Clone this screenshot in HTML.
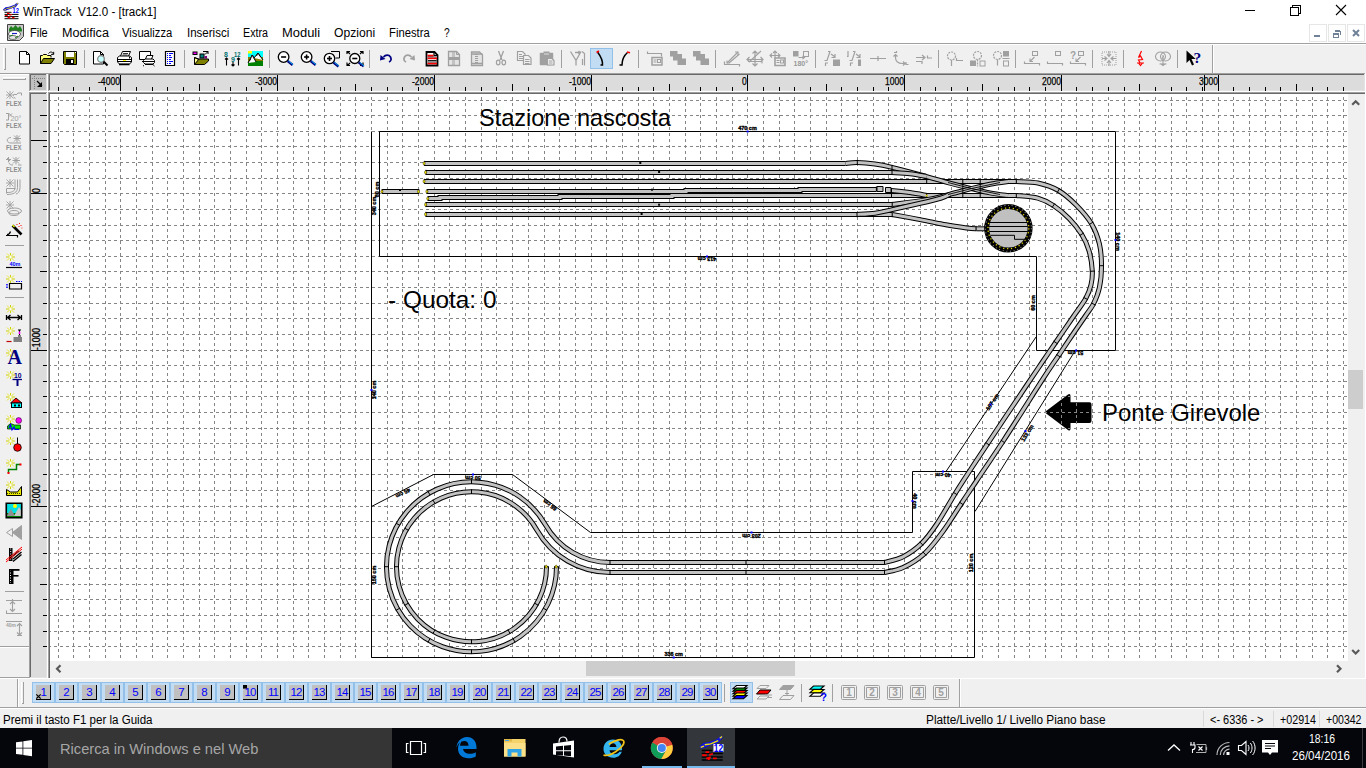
<!DOCTYPE html><html><head><meta charset="utf-8"><title>WinTrack V12.0 - [track1]</title><style>
*{box-sizing:border-box;margin:0;padding:0}
html,body{width:1366px;height:768px;overflow:hidden;background:#f0f0f0}
body{position:relative;font-family:"Liberation Sans",sans-serif;font-size:12px;color:#000}
.abs{position:absolute}
.t{position:absolute;white-space:nowrap;line-height:1}
svg{position:absolute;overflow:visible}
</style></head><body><div class="abs" style="left:0px;top:0px;width:1366px;height:43px;background:#fff;"></div><div class="t" style="left:23.00px;top:5.84px;font-size:12px;color:#000;transform-origin:0 0;transform:scaleX(0.9655);">WinTrack&nbsp; V12.0 - [track1]</div><svg style="left:1240px;top:0" width="126" height="22" viewBox="1240 0 126 22" fill="none" stroke="#000" stroke-width="1" shape-rendering="crispEdges"><path d="M1245 10.5h10"/><path d="M1290.5 7.5h8v8h-8z M1292.5 7.5v-2h8v8h-2"/><path d="M1336 5l10 10M1346 5l-10 10" shape-rendering="auto" stroke-width="1.1"/></svg><div class="abs" style="left:1309px;top:24px;width:18px;height:18px;background:#fff;border:1px solid #e6e6e6"></div><div class="abs" style="left:1328px;top:24px;width:18px;height:18px;background:#fff;border:1px solid #e6e6e6"></div><div class="abs" style="left:1347px;top:24px;width:18px;height:18px;background:#fff;border:1px solid #e6e6e6"></div><svg style="left:1309px;top:24px" width="57" height="18" viewBox="1309 24 57 18" fill="none" stroke="#6f8298" shape-rendering="crispEdges"><path d="M1314 36h6" stroke-width="2"/><path d="M1335 31.5h5v3M1333 33.5h5v4h-5z" stroke-width="1"/><path d="M1333 34h5M1335 31h5" stroke-width="2"/><path d="M1353 30l6 6M1359 30l-6 6" stroke-width="2" shape-rendering="auto"/></svg><div class="t" style="left:30.00px;top:26.84px;font-size:12px;color:#000;transform-origin:0 0;transform:scaleX(0.9150);">File</div><div class="t" style="left:61.90px;top:26.84px;font-size:12px;color:#000;transform-origin:0 0;transform:scaleX(1.0495);">Modifica</div><div class="t" style="left:122.20px;top:26.84px;font-size:12px;color:#000;transform-origin:0 0;transform:scaleX(0.9347);">Visualizza</div><div class="t" style="left:186.90px;top:26.84px;font-size:12px;color:#000;transform-origin:0 0;transform:scaleX(0.9588);">Inserisci</div><div class="t" style="left:243.00px;top:26.84px;font-size:12px;color:#000;transform-origin:0 0;transform:scaleX(0.8924);">Extra</div><div class="t" style="left:282.00px;top:26.84px;font-size:12px;color:#000;transform-origin:0 0;transform:scaleX(1.0775);">Moduli</div><div class="t" style="left:334.10px;top:26.84px;font-size:12px;color:#000;transform-origin:0 0;transform:scaleX(1.0101);">Opzioni</div><div class="t" style="left:388.80px;top:26.84px;font-size:12px;color:#000;transform-origin:0 0;transform:scaleX(0.9387);">Finestra</div><div class="t" style="left:443.70px;top:26.84px;font-size:12px;color:#000;transform-origin:0 0;transform:scaleX(0.8523);">?</div><div class="abs" style="left:0px;top:43px;width:1366px;height:1px;background:#a0a0a0;"></div><div class="abs" style="left:0px;top:44px;width:1366px;height:1px;background:#fff;"></div><div class="abs" style="left:0px;top:45px;width:1366px;height:28px;background:#f0f0f0;"></div><div class="abs" style="left:3px;top:48px;width:3px;height:22px;background:#fff;"></div><div class="abs" style="left:4px;top:48px;width:2px;height:22px;background:#a0a0a0;"></div><div class="abs" style="left:4px;top:48px;width:1px;height:21px;background:#f0f0f0;"></div><div class="abs" style="left:1212px;top:45px;width:1px;height:28px;background:#a0a0a0;"></div><div class="abs" style="left:1213px;top:45px;width:1px;height:28px;background:#fff;"></div><div class="abs" style="left:0px;top:73px;width:30px;height:1px;background:#a0a0a0;"></div><div class="abs" style="left:0px;top:74px;width:30px;height:1px;background:#fff;"></div><div class="abs" style="left:0px;top:75px;width:29px;height:603px;background:#f0f0f0;"></div><div class="abs" style="left:3px;top:77px;width:23px;height:3px;background:#fff;"></div><div class="abs" style="left:3px;top:78px;width:23px;height:2px;background:#a0a0a0;"></div><div class="abs" style="left:3px;top:78px;width:22px;height:1px;background:#f0f0f0;"></div><div class="abs" style="left:0px;top:646px;width:29px;height:1px;background:#a0a0a0;"></div><div class="abs" style="left:0px;top:647px;width:29px;height:1px;background:#fff;"></div><div class="abs" style="left:29px;top:73px;width:19px;height:19px;background:#fff;"></div><div class="abs" style="left:29px;top:73px;width:18px;height:18px;background:#a0a0a0;"></div><div class="abs" style="left:30px;top:74px;width:17px;height:17px;background:#e3e3e3;"></div><div class="abs" style="left:30px;top:74px;width:16px;height:16px;background:#696969;"></div><div class="abs" style="left:31px;top:75px;width:15px;height:15px;background:#c0c0c0;"></div><div class="abs" style="left:48px;top:73px;width:1318px;height:19px;background:#fff;"></div><div class="abs" style="left:48px;top:73px;width:1317px;height:18px;background:#a0a0a0;"></div><div class="abs" style="left:49px;top:74px;width:1316px;height:17px;background:#e3e3e3;"></div><div class="abs" style="left:49px;top:74px;width:1315px;height:16px;background:#696969;"></div><div class="abs" style="left:50px;top:75px;width:1314px;height:15px;background:#dcdcdc;"></div><div class="abs" style="left:29px;top:92px;width:19px;height:587px;background:#fff;"></div><div class="abs" style="left:29px;top:92px;width:18px;height:586px;background:#a0a0a0;"></div><div class="abs" style="left:30px;top:93px;width:17px;height:585px;background:#e3e3e3;"></div><div class="abs" style="left:30px;top:93px;width:16px;height:584px;background:#696969;"></div><div class="abs" style="left:31px;top:94px;width:15px;height:583px;background:#dcdcdc;"></div><div class="abs" style="left:29px;top:73px;width:1337px;height:1px;background:#a0a0a0;"></div><div class="abs" style="left:48px;top:92px;width:1318px;height:587px;background:#a0a0a0;"></div><div class="abs" style="left:49px;top:93px;width:1317px;height:586px;background:#696969;"></div><div class="abs" style="left:50px;top:94px;width:1298px;height:567px;background:#fff;"></div><div class="abs" style="left:1348px;top:94px;width:18px;height:584px;background:#f0f0f0;"></div><div class="abs" style="left:50px;top:661px;width:1298px;height:17px;background:#f0f0f0;"></div><div class="abs" style="left:1365px;top:73px;width:1px;height:605px;background:#fff;"></div><div class="abs" style="left:1348px;top:370px;width:15px;height:39px;background:#cdcdcd;"></div><div class="abs" style="left:586px;top:661px;width:209px;height:15px;background:#cdcdcd;"></div><svg style="left:0;top:0" width="1366" height="768" fill="none" stroke="#5a5a5a" stroke-width="2.2"><path d="M1352.2 104.8l3.500-3.500l3.500 3.500"/><path d="M1352.200 650l3.500 3.500l3.500-3.500"/><path d="M1337 665.200l3.500 3.500l-3.500 3.500"/><path d="M60.500 665.200l-3.500 3.500l3.500 3.500"/></svg><div class="abs" style="left:0px;top:677px;width:30px;height:1px;background:#a0a0a0;"></div><div class="abs" style="left:0px;top:678px;width:1366px;height:1px;background:#fff;"></div><div class="abs" style="left:0px;top:679px;width:1366px;height:28px;background:#f0f0f0;"></div><div class="abs" style="left:17px;top:679px;width:1px;height:28px;background:#a0a0a0;"></div><div class="abs" style="left:18px;top:679px;width:1px;height:28px;background:#fff;"></div><div class="abs" style="left:21px;top:682px;width:3px;height:22px;background:#fff;"></div><div class="abs" style="left:22px;top:682px;width:2px;height:22px;background:#a0a0a0;"></div><div class="abs" style="left:22px;top:682px;width:1px;height:21px;background:#f0f0f0;"></div><div class="abs" style="left:959px;top:679px;width:1px;height:28px;background:#a0a0a0;"></div><div class="abs" style="left:960px;top:679px;width:1px;height:28px;background:#fff;"></div><div class="abs" style="left:0px;top:707px;width:1366px;height:1px;background:#a0a0a0;"></div><div class="abs" style="left:0px;top:708px;width:1366px;height:1px;background:#fff;"></div><div class="abs" style="left:0px;top:709px;width:1366px;height:19px;background:#f0f0f0;"></div><div class="t" style="left:2.50px;top:714.14px;font-size:12px;color:#000;transform-origin:0 0;transform:scaleX(0.9620);">Premi il tasto F1 per la Guida</div><div class="t" style="left:926.30px;top:714.14px;font-size:12px;color:#000;transform-origin:0 0;transform:scaleX(0.9856);">Platte/Livello 1/ Livello Piano base</div><div class="t" style="left:1209.70px;top:714.14px;font-size:12px;color:#000;transform-origin:0 0;transform:scaleX(0.9111);">&lt;- 6336 - &gt;</div><div class="t" style="left:1280.00px;top:714.14px;font-size:12px;color:#000;transform-origin:0 0;transform:scaleX(0.8913);">+02914</div><div class="t" style="left:1326.00px;top:714.14px;font-size:12px;color:#000;transform-origin:0 0;transform:scaleX(0.8789);">+00342</div><div class="abs" style="left:1203px;top:711px;width:1px;height:16px;background:#d9d9d9;"></div><div class="abs" style="left:1273px;top:711px;width:1px;height:16px;background:#d9d9d9;"></div><div class="abs" style="left:1319px;top:711px;width:1px;height:16px;background:#d9d9d9;"></div><svg style="left:0;top:0" width="1366" height="700" shape-rendering="crispEdges" fill="none" stroke="#000" stroke-width="1"><path d="M58.5 87v4M73.5 87v4M89.5 87v4M105.5 87v4M120.5 75v16M136.5 87v4M152.5 87v4M167.5 87v4M183.5 87v4M199.5 84v7M214.5 87v4M230.5 87v4M246.5 87v4M261.5 87v4M277.5 75v16M293.5 87v4M308.5 87v4M324.5 87v4M340.5 87v4M355.5 84v7M371.5 87v4M387.5 87v4M402.5 87v4M418.5 87v4M434.5 75v16M449.5 87v4M465.5 87v4M481.5 87v4M496.5 87v4M512.5 84v7M528.5 87v4M544.5 87v4M559.5 87v4M575.5 87v4M591.5 75v16M606.5 87v4M622.5 87v4M638.5 87v4M653.5 87v4M669.5 84v7M685.5 87v4M700.5 87v4M716.5 87v4M732.5 87v4M747.5 75v16M763.5 87v4M779.5 87v4M794.5 87v4M810.5 87v4M826.5 84v7M841.5 87v4M857.5 87v4M873.5 87v4M888.5 87v4M904.5 75v16M920.5 87v4M935.5 87v4M951.5 87v4M967.5 87v4M982.5 84v7M998.5 87v4M1014.5 87v4M1029.5 87v4M1045.5 87v4M1061.5 75v16M1076.5 87v4M1092.5 87v4M1108.5 87v4M1124.5 87v4M1139.5 84v7M1155.5 87v4M1171.5 87v4M1186.5 87v4M1202.5 87v4M1218.5 75v16M1233.5 87v4M1249.5 87v4M1265.5 87v4M1280.5 87v4M1296.5 84v7M1312.5 87v4M1327.5 87v4M1343.5 87v4M43 100.5h4M40 115.5h7M43 131.5h4M43 146.5h4M43 162.5h4M43 178.5h4M31 193.5h16M43 209.5h4M43 225.5h4M43 240.5h4M43 256.5h4M40 271.5h7M43 287.5h4M43 303.5h4M43 318.5h4M43 334.5h4M31 350.5h16M43 365.5h4M43 381.5h4M43 396.5h4M43 412.5h4M40 428.5h7M43 443.5h4M43 459.5h4M43 474.5h4M43 490.5h4M31 506.5h16M43 521.5h4M43 537.5h4M43 553.5h4M43 568.5h4M40 584.5h7M43 599.5h4M43 615.5h4M43 631.5h4M43 646.5h4M1204.5 75v16M31 140.5h16"/></svg><svg style="left:31px;top:75px" width="16" height="16" viewBox="31 75 16 16" shape-rendering="crispEdges"><path d="M32 78.5h14M34.5 76v14" stroke="#808080" stroke-dasharray="1 1" fill="none"/><path d="M37 81l5 5" stroke="#000" stroke-width="1.2" shape-rendering="auto"/><path d="M42 82v5h-5z" fill="#000" shape-rendering="auto"/></svg><div class="t" style="left:98.20px;top:76.73px;font-size:10px;color:#000;transform-origin:0 0;transform:scaleX(0.8601);-webkit-text-stroke:0.25px #000;">-4000</div><div class="t" style="left:255.20px;top:76.73px;font-size:10px;color:#000;transform-origin:0 0;transform:scaleX(0.8601);-webkit-text-stroke:0.25px #000;">-3000</div><div class="t" style="left:412.20px;top:76.73px;font-size:10px;color:#000;transform-origin:0 0;transform:scaleX(0.8601);-webkit-text-stroke:0.25px #000;">-2000</div><div class="t" style="left:569.20px;top:76.73px;font-size:10px;color:#000;transform-origin:0 0;transform:scaleX(0.8601);-webkit-text-stroke:0.25px #000;">-1000</div><div class="t" style="left:742.45px;top:76.73px;font-size:10px;color:#000;transform-origin:0 0;transform:scaleX(0.8539);-webkit-text-stroke:0.25px #000;">0</div><div class="t" style="left:885.20px;top:76.73px;font-size:10px;color:#000;transform-origin:0 0;transform:scaleX(0.8539);-webkit-text-stroke:0.25px #000;">1000</div><div class="t" style="left:1042.20px;top:76.73px;font-size:10px;color:#000;transform-origin:0 0;transform:scaleX(0.8539);-webkit-text-stroke:0.25px #000;">2000</div><div class="t" style="left:1199.20px;top:76.73px;font-size:10px;color:#000;transform-origin:0 0;transform:scaleX(0.8539);-webkit-text-stroke:0.25px #000;">3000</div><div class="t" style="left:31.9px;top:193.3px;font-size:10px;color:#000;-webkit-text-stroke:0.25px #000;transform-origin:0 0;transform:rotate(-90deg) scaleX(0.8539);">0</div><div class="t" style="left:31.9px;top:350.3px;font-size:10px;color:#000;-webkit-text-stroke:0.25px #000;transform-origin:0 0;transform:rotate(-90deg) scaleX(0.8601);">-1000</div><div class="t" style="left:31.9px;top:506.3px;font-size:10px;color:#000;-webkit-text-stroke:0.25px #000;transform-origin:0 0;transform:rotate(-90deg) scaleX(0.8601);">-2000</div><svg style="left:50px;top:94px;overflow:hidden" width="1298" height="567" viewBox="50 94 1298 567"><path d="M1044.5 412.2L1068 394.5Q1070.5 393 1070.5 396V402.2H1089.5Q1091.5 402.2 1091.5 404.2V421Q1091.5 423 1089.5 423H1070.5V428.5Q1070.5 431.5 1068 430Z" fill="#000"/><path d="M58.5 91v575M73.5 91v575M89.5 91v575M105.5 91v575M120.5 91v575M136.5 91v575M152.5 91v575M167.5 91v575M183.5 91v575M199.5 91v575M214.5 91v575M230.5 91v575M246.5 91v575M261.5 91v575M277.5 91v575M293.5 91v575M308.5 91v575M324.5 91v575M340.5 91v575M355.5 91v575M371.5 91v575M387.5 91v575M402.5 91v575M418.5 91v575M434.5 91v575M449.5 91v575M465.5 91v575M481.5 91v575M496.5 91v575M512.5 91v575M528.5 91v575M544.5 91v575M559.5 91v575M575.5 91v575M591.5 91v575M606.5 91v575M622.5 91v575M638.5 91v575M653.5 91v575M669.5 91v575M685.5 91v575M700.5 91v575M716.5 91v575M732.5 91v575M747.5 91v575M763.5 91v575M779.5 91v575M794.5 91v575M810.5 91v575M826.5 91v575M841.5 91v575M857.5 91v575M873.5 91v575M888.5 91v575M904.5 91v575M920.5 91v575M935.5 91v575M951.5 91v575M967.5 91v575M982.5 91v575M998.5 91v575M1014.5 91v575M1029.5 91v575M1045.5 91v575M1061.5 91v575M1076.5 91v575M1092.5 91v575M1108.5 91v575M1124.5 91v575M1139.5 91v575M1155.5 91v575M1171.5 91v575M1186.5 91v575M1202.5 91v575M1218.5 91v575M1233.5 91v575M1249.5 91v575M1265.5 91v575M1280.5 91v575M1296.5 91v575M1312.5 91v575M1327.5 91v575M1343.5 91v575" stroke="#858585" stroke-width="1" stroke-dasharray="3 3" fill="none" shape-rendering="crispEdges"/><path d="M48 100.5h1310M48 115.5h1310M48 131.5h1310M48 146.5h1310M48 162.5h1310M48 178.5h1310M48 193.5h1310M48 209.5h1310M48 225.5h1310M48 240.5h1310M48 256.5h1310M48 271.5h1310M48 287.5h1310M48 303.5h1310M48 318.5h1310M48 334.5h1310M48 350.5h1310M48 365.5h1310M48 381.5h1310M48 396.5h1310M48 412.5h1310M48 428.5h1310M48 443.5h1310M48 459.5h1310M48 474.5h1310M48 490.5h1310M48 506.5h1310M48 521.5h1310M48 537.5h1310M48 553.5h1310M48 568.5h1310M48 584.5h1310M48 599.5h1310M48 615.5h1310M48 631.5h1310M48 646.5h1310" stroke="#858585" stroke-width="1" stroke-dasharray="3 3" fill="none" shape-rendering="crispEdges"/><path d="M379.5 131.5H1115.5V350.5H1036.5V256.5H379.5ZM371.5 131.5V657.5H974.5V471.5H912.5V532.5H590.5L512.5 474.5H433.5L371.5 506.5M1036 337L946 471.5M1075.3 350.5L975 511.5" stroke="#000" stroke-width="1" fill="none"/><path d="M424.4 163.5L845.6 163.5" stroke="#000" stroke-width="5" fill="none" stroke-linecap="butt"/><path d="M424.4 163.5L845.6 163.5" stroke="#c2c2c2" stroke-width="3" fill="none" stroke-linecap="butt"/><path d="M425.9 172.5L892.0 172.5" stroke="#000" stroke-width="5" fill="none" stroke-linecap="butt"/><path d="M425.9 172.5L892.0 172.5" stroke="#c2c2c2" stroke-width="3" fill="none" stroke-linecap="butt"/><path d="M424.4 181.5L1016.3 181.5" stroke="#000" stroke-width="5" fill="none" stroke-linecap="butt"/><path d="M424.4 181.5L1016.3 181.5" stroke="#c2c2c2" stroke-width="3" fill="none" stroke-linecap="butt"/><path d="M427.2 191.5L686.0 191.5L686.0 190.5L800.0 190.5L800.0 189.5L876.4 189.5" stroke="#000" stroke-width="5" fill="none" stroke-linecap="butt"/><path d="M427.2 191.5L686.0 191.5L686.0 190.5L800.0 190.5L800.0 189.5L876.4 189.5" stroke="#c2c2c2" stroke-width="3" fill="none" stroke-linecap="butt"/><path d="M428.1 198.5L440.0 198.5L440.0 197.5L560.0 197.5L560.0 196.5L672.0 196.5L672.0 195.5L1016.3 195.5" stroke="#000" stroke-width="5" fill="none" stroke-linecap="butt"/><path d="M428.1 198.5L440.0 198.5L440.0 197.5L560.0 197.5L560.0 196.5L672.0 196.5L672.0 195.5L1016.3 195.5" stroke="#c2c2c2" stroke-width="3" fill="none" stroke-linecap="butt"/><path d="M425.9 204.5L892.2 204.5" stroke="#000" stroke-width="5" fill="none" stroke-linecap="butt"/><path d="M425.9 204.5L892.2 204.5" stroke="#c2c2c2" stroke-width="3" fill="none" stroke-linecap="butt"/><path d="M425.9 214.5L892.2 214.5" stroke="#000" stroke-width="5" fill="none" stroke-linecap="butt"/><path d="M425.9 214.5L892.2 214.5" stroke="#c2c2c2" stroke-width="3" fill="none" stroke-linecap="butt"/><path d="M382.2 191.5L418.8 191.5" stroke="#000" stroke-width="5" fill="none" stroke-linecap="butt"/><path d="M382.2 191.5L418.8 191.5" stroke="#c2c2c2" stroke-width="3" fill="none" stroke-linecap="butt"/><path d="M976.6 228.8L985.0 228.8" stroke="#000" stroke-width="5" fill="none" stroke-linecap="butt"/><path d="M976.6 228.8L985.0 228.8" stroke="#c2c2c2" stroke-width="3" fill="none" stroke-linecap="butt"/><path d="M845.6 163.5C847.5 163.3 852.4 162.4 857.3 162.5C862.2 162.6 869.2 163.2 875.0 164.0C880.8 164.8 883.4 165.3 892.0 167.4C900.6 169.5 917.0 174.0 926.7 176.6C936.4 179.2 942.6 181.2 950.0 183.2C957.4 185.2 964.6 187.0 971.3 188.6C978.0 190.2 983.9 191.8 990.0 192.9C996.1 194.1 1005.0 195.1 1008.0 195.5" stroke="#000" stroke-width="5" fill="none" stroke-linecap="butt"/><path d="M845.6 163.5C847.5 163.3 852.4 162.4 857.3 162.5C862.2 162.6 869.2 163.2 875.0 164.0C880.8 164.8 883.4 165.3 892.0 167.4C900.6 169.5 917.0 174.0 926.7 176.6C936.4 179.2 942.6 181.2 950.0 183.2C957.4 185.2 964.6 187.0 971.3 188.6C978.0 190.2 983.9 191.8 990.0 192.9C996.1 194.1 1005.0 195.1 1008.0 195.5" stroke="#c2c2c2" stroke-width="3" fill="none" stroke-linecap="butt"/><path d="M892.0 172.5C895.0 172.7 904.2 173.0 910.0 173.7C915.8 174.4 923.9 176.1 926.7 176.6" stroke="#000" stroke-width="5" fill="none" stroke-linecap="butt"/><path d="M892.0 172.5C895.0 172.7 904.2 173.0 910.0 173.7C915.8 174.4 923.9 176.1 926.7 176.6" stroke="#c2c2c2" stroke-width="3" fill="none" stroke-linecap="butt"/><path d="M891.5 190.5C894.6 190.8 904.1 191.8 910.0 192.6C915.9 193.4 923.9 195.0 926.7 195.5" stroke="#000" stroke-width="5" fill="none" stroke-linecap="butt"/><path d="M891.5 190.5C894.6 190.8 904.1 191.8 910.0 192.6C915.9 193.4 923.9 195.0 926.7 195.5" stroke="#c2c2c2" stroke-width="3" fill="none" stroke-linecap="butt"/><path d="M892.2 204.5C898.1 203.7 917.8 201.3 927.4 199.6C937.0 197.9 942.7 196.0 950.0 194.2C957.3 192.4 964.6 190.3 971.3 188.6C978.0 186.9 983.9 185.4 990.0 184.2C996.1 183.0 1005.0 181.9 1008.0 181.5" stroke="#000" stroke-width="5" fill="none" stroke-linecap="butt"/><path d="M892.2 204.5C898.1 203.7 917.8 201.3 927.4 199.6C937.0 197.9 942.7 196.0 950.0 194.2C957.3 192.4 964.6 190.3 971.3 188.6C978.0 186.9 983.9 185.4 990.0 184.2C996.1 183.0 1005.0 181.9 1008.0 181.5" stroke="#c2c2c2" stroke-width="3" fill="none" stroke-linecap="butt"/><path d="M892.2 214.5C896.8 215.3 911.0 217.9 920.0 219.6C929.0 221.3 938.2 223.4 946.0 224.8C953.8 226.2 961.9 227.3 967.0 228.0C972.1 228.7 975.0 228.7 976.6 228.8" stroke="#000" stroke-width="5" fill="none" stroke-linecap="butt"/><path d="M892.2 214.5C896.8 215.3 911.0 217.9 920.0 219.6C929.0 221.3 938.2 223.4 946.0 224.8C953.8 226.2 961.9 227.3 967.0 228.0C972.1 228.7 975.0 228.7 976.6 228.8" stroke="#c2c2c2" stroke-width="3" fill="none" stroke-linecap="butt"/><path d="M857.0 214.5C860.0 214.3 869.1 214.0 875.0 213.2C880.9 212.4 884.7 211.2 892.2 209.6C899.8 207.9 912.1 205.2 920.3 203.3C928.5 201.4 936.4 199.5 941.4 198.0C946.4 196.5 948.6 194.8 950.0 194.2" stroke="#000" stroke-width="5" fill="none" stroke-linecap="butt"/><path d="M857.0 214.5C860.0 214.3 869.1 214.0 875.0 213.2C880.9 212.4 884.7 211.2 892.2 209.6C899.8 207.9 912.1 205.2 920.3 203.3C928.5 201.4 936.4 199.5 941.4 198.0C946.4 196.5 948.6 194.8 950.0 194.2" stroke="#c2c2c2" stroke-width="3" fill="none" stroke-linecap="butt"/><path d="M1016.3 181.5C1019.9 181.8 1030.9 181.5 1037.9 183.0C1044.9 184.5 1052.0 186.8 1058.4 190.5C1064.8 194.2 1070.6 199.5 1076.1 205.0C1081.6 210.5 1087.3 216.8 1091.2 223.3C1095.1 229.8 1097.7 236.7 1099.4 243.8C1101.1 250.9 1101.5 258.4 1101.5 265.7C1101.5 273.0 1100.8 281.2 1099.4 287.6C1098.1 294.0 1095.7 299.4 1093.4 304.0C1091.1 308.6 1089.3 310.2 1085.7 315.5C1082.1 320.8 1076.5 328.8 1072.0 335.5C1067.5 342.2 1063.4 348.3 1058.4 355.8C1053.4 363.3 1051.2 366.0 1042.0 380.3C1032.8 394.6 1013.8 424.8 1002.9 441.5C992.0 458.2 983.7 470.2 976.8 480.5C969.9 490.8 967.0 495.0 961.4 503.5C955.8 512.0 949.0 523.1 942.9 531.5C936.8 539.9 931.1 547.6 924.5 553.6C917.9 559.6 909.7 564.5 903.0 567.6C896.3 570.8 887.6 571.7 884.5 572.5" stroke="#000" stroke-width="5" fill="none" stroke-linecap="butt"/><path d="M1016.3 181.5C1019.9 181.8 1030.9 181.5 1037.9 183.0C1044.9 184.5 1052.0 186.8 1058.4 190.5C1064.8 194.2 1070.6 199.5 1076.1 205.0C1081.6 210.5 1087.3 216.8 1091.2 223.3C1095.1 229.8 1097.7 236.7 1099.4 243.8C1101.1 250.9 1101.5 258.4 1101.5 265.7C1101.5 273.0 1100.8 281.2 1099.4 287.6C1098.1 294.0 1095.7 299.4 1093.4 304.0C1091.1 308.6 1089.3 310.2 1085.7 315.5C1082.1 320.8 1076.5 328.8 1072.0 335.5C1067.5 342.2 1063.4 348.3 1058.4 355.8C1053.4 363.3 1051.2 366.0 1042.0 380.3C1032.8 394.6 1013.8 424.8 1002.9 441.5C992.0 458.2 983.7 470.2 976.8 480.5C969.9 490.8 967.0 495.0 961.4 503.5C955.8 512.0 949.0 523.1 942.9 531.5C936.8 539.9 931.1 547.6 924.5 553.6C917.9 559.6 909.7 564.5 903.0 567.6C896.3 570.8 887.6 571.7 884.5 572.5" stroke="#c2c2c2" stroke-width="3" fill="none" stroke-linecap="butt"/><path d="M1016.3 195.5C1019.9 195.9 1031.7 196.5 1037.9 198.2C1044.1 199.9 1048.2 202.1 1053.4 205.5C1058.6 208.9 1064.6 213.9 1069.3 218.7C1074.0 223.5 1078.3 229.0 1081.6 234.3C1084.9 239.6 1087.2 244.5 1089.0 250.7C1090.8 256.8 1092.0 265.5 1092.3 271.2C1092.6 276.9 1092.1 280.2 1091.0 284.8C1089.9 289.4 1088.6 293.2 1085.7 298.5C1082.8 303.8 1078.4 309.2 1073.4 316.5C1068.4 323.8 1060.8 334.8 1055.6 342.5C1050.4 350.2 1047.0 355.1 1042.0 362.5C1037.0 369.9 1034.6 373.4 1025.5 387.0C1016.4 400.6 996.6 430.1 987.5 443.8C978.4 457.6 976.0 461.2 970.6 469.5C965.2 477.8 960.8 484.4 955.2 493.5C949.6 502.6 942.4 515.6 936.8 524.0C931.2 532.4 927.0 538.1 921.4 543.6C915.8 549.1 909.1 553.6 903.0 556.8C896.9 559.9 887.6 561.5 884.5 562.5" stroke="#000" stroke-width="5" fill="none" stroke-linecap="butt"/><path d="M1016.3 195.5C1019.9 195.9 1031.7 196.5 1037.9 198.2C1044.1 199.9 1048.2 202.1 1053.4 205.5C1058.6 208.9 1064.6 213.9 1069.3 218.7C1074.0 223.5 1078.3 229.0 1081.6 234.3C1084.9 239.6 1087.2 244.5 1089.0 250.7C1090.8 256.8 1092.0 265.5 1092.3 271.2C1092.6 276.9 1092.1 280.2 1091.0 284.8C1089.9 289.4 1088.6 293.2 1085.7 298.5C1082.8 303.8 1078.4 309.2 1073.4 316.5C1068.4 323.8 1060.8 334.8 1055.6 342.5C1050.4 350.2 1047.0 355.1 1042.0 362.5C1037.0 369.9 1034.6 373.4 1025.5 387.0C1016.4 400.6 996.6 430.1 987.5 443.8C978.4 457.6 976.0 461.2 970.6 469.5C965.2 477.8 960.8 484.4 955.2 493.5C949.6 502.6 942.4 515.6 936.8 524.0C931.2 532.4 927.0 538.1 921.4 543.6C915.8 549.1 909.1 553.6 903.0 556.8C896.9 559.9 887.6 561.5 884.5 562.5" stroke="#c2c2c2" stroke-width="3" fill="none" stroke-linecap="butt"/><path d="M610.0 562.5L884.5 562.5" stroke="#000" stroke-width="5" fill="none" stroke-linecap="butt"/><path d="M610.0 562.5L884.5 562.5" stroke="#c2c2c2" stroke-width="3" fill="none" stroke-linecap="butt"/><path d="M610.0 572.5L884.5 572.5" stroke="#000" stroke-width="5" fill="none" stroke-linecap="butt"/><path d="M610.0 572.5L884.5 572.5" stroke="#c2c2c2" stroke-width="3" fill="none" stroke-linecap="butt"/><path d="M556.5 566.7A85 85 0 1 1 545.4 524.8A74.2 74.2 0 0 0 610 562.5" stroke="#000" stroke-width="5" fill="none" stroke-linecap="butt"/><path d="M556.5 566.7A85 85 0 1 1 545.4 524.8A74.2 74.2 0 0 0 610 562.5" stroke="#c2c2c2" stroke-width="3" fill="none" stroke-linecap="butt"/><path d="M546.5 566.7A75 75 0 1 1 536.7 529.7A84 84 0 0 0 610 572.5" stroke="#000" stroke-width="5" fill="none" stroke-linecap="butt"/><path d="M546.5 566.7A75 75 0 1 1 536.7 529.7A84 84 0 0 0 610 572.5" stroke="#c2c2c2" stroke-width="3" fill="none" stroke-linecap="butt"/><path d="M424.4 160.9v5M425.9 169.8v5M424.4 178.8v5M427.2 189.0v5M428.1 196.0v5M425.9 202.1v5M425.9 211.8v5M382.2 189.0v5M418.8 189.0v5M857.3 159.9v5M892.0 164.9v5M892.0 169.8v5M926.7 178.9v5M962.8 178.9v5M980.2 178.9v5M1016.3 178.9v5M876.4 186.5v5M891.5 188.0v5M891.5 193.0v5M926.7 193.0v5M962.8 193.1v5M980.2 193.1v5M1016.3 193.1v5M892.2 201.9v5M892.2 212.2v5M857.0 212.2v5M976.0 225.8v5M985.0 225.8v5M610.0 559.9v5M610.0 569.7v5M884.5 559.9v5M884.5 569.7v5M746.0 559.9v5M746.0 569.7v5" stroke="#000" stroke-width="1" fill="none"/><path d="M544.2 566.7L548.8 566.7M554.2 566.7L558.8 566.7M534.5 603.1L538.4 605.4M543.1 608.1L547.1 610.4M507.9 629.7L510.1 633.6M512.9 638.3L515.1 642.3M471.5 639.4L471.5 644.0M471.5 649.4L471.5 654.0M435.2 629.7L432.9 633.6M430.2 638.3L427.9 642.3M408.5 603.1L404.6 605.4M399.9 608.1L395.9 610.4M398.8 566.7L394.2 566.7M388.8 566.7L384.2 566.7M408.5 530.4L404.6 528.1M399.9 525.4L395.9 523.1M435.1 503.7L432.8 499.8M430.1 495.1L427.8 491.1M471.5 494.0L471.5 489.4M471.5 484.0L471.5 479.4" stroke="#000" stroke-width="1" fill="none"/><path d="M948 182.5L971.3 188.6L1000 194.5M948 194.5L971.3 188.6L1000 182.5M962.8 183.5v10M980.2 183.500v10" stroke="#000" stroke-width=".9" fill="none"/><path d="M1059.6 188.3L1057.2 192.7M1093.3 222.0L1089.1 224.6M1104.0 265.7L1099.0 265.7M1095.6 305.1L1091.2 302.9M1060.5 357.2L1056.3 354.4M1005.0 442.9L1000.8 440.1M963.5 504.9L959.3 502.1M926.2 555.5L922.8 551.7M1054.8 203.4L1052.0 207.6M1083.7 233.0L1079.5 235.6M1094.8 271.1L1089.8 271.3M1087.9 299.7L1083.5 297.3M1057.7 343.9L1053.5 341.1M989.6 445.2L985.4 442.4M957.3 494.8L953.1 492.2M923.1 545.4L919.7 541.8" stroke="#000" stroke-width="1" fill="none"/><path d="M877 186.5h6v5h-6zM885.5 187.5h5.5v5h-5.5z" stroke="#000" stroke-width="1" fill="#c0c0c0"/><ellipse cx="424.1" cy="163.4" rx="1.1" ry="1.600" fill="#f0e000" stroke="#000" stroke-width="0.4"/><ellipse cx="425.6" cy="172.3" rx="1.1" ry="1.600" fill="#f0e000" stroke="#000" stroke-width="0.4"/><ellipse cx="424.1" cy="181.3" rx="1.1" ry="1.600" fill="#f0e000" stroke="#000" stroke-width="0.4"/><ellipse cx="426.9" cy="191.5" rx="1.1" ry="1.600" fill="#f0e000" stroke="#000" stroke-width="0.4"/><ellipse cx="427.8" cy="198.5" rx="1.1" ry="1.600" fill="#f0e000" stroke="#000" stroke-width="0.4"/><ellipse cx="425.6" cy="204.6" rx="1.1" ry="1.600" fill="#f0e000" stroke="#000" stroke-width="0.4"/><ellipse cx="425.6" cy="214.3" rx="1.1" ry="1.600" fill="#f0e000" stroke="#000" stroke-width="0.4"/><ellipse cx="381.9" cy="191.5" rx="1.1" ry="1.600" fill="#f0e000" stroke="#000" stroke-width="0.4"/><ellipse cx="418.5" cy="191.5" rx="1.1" ry="1.600" fill="#f0e000" stroke="#000" stroke-width="0.4"/><ellipse cx="546.2" cy="566.7" rx="1.1" ry="1.600" fill="#f0e000" stroke="#000" stroke-width="0.4"/><ellipse cx="556.2" cy="566.7" rx="1.1" ry="1.600" fill="#f0e000" stroke="#000" stroke-width="0.4"/><rect x="925.7" y="194.7" width="1.8" height="1.8" fill="#e6d800"/><rect x="639.3" y="162" width="2" height="2" fill="#000"/><rect x="658.1" y="171" width="2" height="2" fill="#000"/><rect x="651" y="188.7" width="2" height="2" fill="#000"/><rect x="658.1" y="203.7" width="2" height="2" fill="#000"/><rect x="640.6" y="213" width="2" height="2" fill="#000"/><rect x="399" y="189" width="2" height="2" fill="#000"/><circle cx="1008.4" cy="228.3" r="21.7" fill="#c0c0c0" stroke="#000" stroke-width="5"/><circle cx="1008.4" cy="228.3" r="20.4" fill="none" stroke="#e6d800" stroke-width="1.3" stroke-dasharray="1.2 2.8"/><circle cx="1008.4" cy="228.3" r="23" fill="none" stroke="#909090" stroke-width="1.1" stroke-dasharray="1 2.7"/><path d="M990 222.5h37M989.2 226.5h38.500M989.200 231.500h38.500M991 235.300h23.500v4h11" stroke="#000" stroke-width="1" fill="none"/><text x="747.5" y="130" font-size="5.6" font-weight="700" text-anchor="middle" textLength="18.6" lengthAdjust="spacingAndGlyphs" font-family="Liberation Sans,sans-serif" fill="#000" stroke="#000" stroke-width=".35" transform="rotate(0 747.5 130)">470 cm</text><text x="707" y="257.2" font-size="5.6" font-weight="700" text-anchor="middle" textLength="18.6" lengthAdjust="spacingAndGlyphs" font-family="Liberation Sans,sans-serif" fill="#000" stroke="#000" stroke-width=".35" transform="rotate(180 707 257.2)">413 cm</text><text x="1116.2" y="241.5" font-size="5.6" font-weight="700" text-anchor="middle" textLength="18.6" lengthAdjust="spacingAndGlyphs" font-family="Liberation Sans,sans-serif" fill="#000" stroke="#000" stroke-width=".35" transform="rotate(90 1116.2 241.5)">140 cm</text><text x="1035" y="303" font-size="5.6" font-weight="700" text-anchor="middle" textLength="15.5" lengthAdjust="spacingAndGlyphs" font-family="Liberation Sans,sans-serif" fill="#000" stroke="#000" stroke-width=".35" transform="rotate(-90 1035 303)">60 cm</text><text x="1075.5" y="351" font-size="5.6" font-weight="700" text-anchor="middle" textLength="15.5" lengthAdjust="spacingAndGlyphs" font-family="Liberation Sans,sans-serif" fill="#000" stroke="#000" stroke-width=".35" transform="rotate(180 1075.5 351)">51 cm</text><text x="378.5" y="189.5" font-size="5.6" font-weight="700" text-anchor="middle" textLength="15.5" lengthAdjust="spacingAndGlyphs" font-family="Liberation Sans,sans-serif" fill="#000" stroke="#000" stroke-width=".35" transform="rotate(-90 378.5 189.5)">80 cm</text><text x="376" y="206" font-size="5.6" font-weight="700" text-anchor="middle" textLength="18.6" lengthAdjust="spacingAndGlyphs" font-family="Liberation Sans,sans-serif" fill="#000" stroke="#000" stroke-width=".35" transform="rotate(-90 376 206)">340 cm</text><text x="376" y="390" font-size="5.6" font-weight="700" text-anchor="middle" textLength="18.6" lengthAdjust="spacingAndGlyphs" font-family="Liberation Sans,sans-serif" fill="#000" stroke="#000" stroke-width=".35" transform="rotate(-90 376 390)">140 cm</text><text x="376" y="575" font-size="5.6" font-weight="700" text-anchor="middle" textLength="18.6" lengthAdjust="spacingAndGlyphs" font-family="Liberation Sans,sans-serif" fill="#000" stroke="#000" stroke-width=".35" transform="rotate(-90 376 575)">150 cm</text><text x="473" y="475.8" font-size="5.6" font-weight="700" text-anchor="middle" textLength="15.5" lengthAdjust="spacingAndGlyphs" font-family="Liberation Sans,sans-serif" fill="#000" stroke="#000" stroke-width=".35" transform="rotate(180 473 475.8)">50 cm</text><text x="402" y="491.5" font-size="5.6" font-weight="700" text-anchor="middle" textLength="15.5" lengthAdjust="spacingAndGlyphs" font-family="Liberation Sans,sans-serif" fill="#000" stroke="#000" stroke-width=".35" transform="rotate(153 402 491.5)">45 cm</text><text x="551" y="503.5" font-size="5.6" font-weight="700" text-anchor="middle" textLength="15.5" lengthAdjust="spacingAndGlyphs" font-family="Liberation Sans,sans-serif" fill="#000" stroke="#000" stroke-width=".35" transform="rotate(216 551 503.5)">65 cm</text><text x="751.5" y="533.5" font-size="5.6" font-weight="700" text-anchor="middle" textLength="18.6" lengthAdjust="spacingAndGlyphs" font-family="Liberation Sans,sans-serif" fill="#000" stroke="#000" stroke-width=".35" transform="rotate(180 751.5 533.5)">203 cm</text><text x="673.7" y="656" font-size="5.6" font-weight="700" text-anchor="middle" textLength="18.6" lengthAdjust="spacingAndGlyphs" font-family="Liberation Sans,sans-serif" fill="#000" stroke="#000" stroke-width=".35" transform="rotate(0 673.7 656)">336 cm</text><text x="943" y="472.8" font-size="5.6" font-weight="700" text-anchor="middle" textLength="15.5" lengthAdjust="spacingAndGlyphs" font-family="Liberation Sans,sans-serif" fill="#000" stroke="#000" stroke-width=".35" transform="rotate(180 943 472.8)">40 cm</text><text x="913.2" y="501" font-size="5.6" font-weight="700" text-anchor="middle" textLength="15.5" lengthAdjust="spacingAndGlyphs" font-family="Liberation Sans,sans-serif" fill="#000" stroke="#000" stroke-width=".35" transform="rotate(90 913.2 501)">40 cm</text><text x="973.2" y="563" font-size="5.6" font-weight="700" text-anchor="middle" textLength="18.6" lengthAdjust="spacingAndGlyphs" font-family="Liberation Sans,sans-serif" fill="#000" stroke="#000" stroke-width=".35" transform="rotate(-90 973.2 563)">120 cm</text><text x="994" y="403" font-size="5.6" font-weight="700" text-anchor="middle" textLength="18.6" lengthAdjust="spacingAndGlyphs" font-family="Liberation Sans,sans-serif" fill="#000" stroke="#000" stroke-width=".35" transform="rotate(-56 994 403)">107 cm</text><text x="1029" y="434" font-size="5.6" font-weight="700" text-anchor="middle" textLength="18.6" lengthAdjust="spacingAndGlyphs" font-family="Liberation Sans,sans-serif" fill="#000" stroke="#000" stroke-width=".35" transform="rotate(-58 1029 434)">133 cm</text><rect x="746.6" y="130.5" width="2" height="2" fill="#00f"/><rect x="706" y="255.5" width="2" height="2" fill="#00f"/><rect x="1114.5" y="239" width="2" height="2" fill="#00f"/><rect x="1075" y="349.5" width="2" height="2" fill="#00f"/><rect x="370.5" y="389" width="2" height="2" fill="#00f"/><rect x="472" y="473.5" width="2" height="2" fill="#00f"/><rect x="750.5" y="531.5" width="2" height="2" fill="#00f"/><rect x="672.7" y="656.5" width="2" height="2" fill="#00f"/><rect x="942" y="470.5" width="2" height="2" fill="#00f"/><rect x="911.5" y="500" width="2" height="2" fill="#00f"/><rect x="989.5" y="403.5" width="2" height="2" fill="#00f"/><rect x="1024.5" y="430" width="2" height="2" fill="#00f"/></svg><div class="t" style="left:478.70px;top:105.58px;font-size:24px;color:#000;transform-origin:0 0;transform:scaleX(0.9785);">Stazione nascosta</div><div class="t" style="left:388.40px;top:288.08px;font-size:24px;color:#000;transform-origin:0 0;transform:scaleX(1.0165);">- Quota: 0</div><div class="t" style="left:1102.30px;top:401.28px;font-size:24px;color:#000;transform-origin:0 0;transform:scaleX(0.9977);">Ponte Girevole</div><div class="abs" style="left:590px;top:48px;width:23px;height:21px;background:#c2dcf3;border:1px solid #92c0e8"></div><svg style="left:0;top:0" width="1366" height="74" viewBox="0 0 1366 74"><g transform="translate(16,51)"><path d="M3.5 .5h7l3 3v9.5h-10z" stroke="#000" fill="#fff" stroke-width="1" /><path d="M10.5 .5v3h3" stroke="#000" fill="none" stroke-width="1" /></g><g transform="translate(39,51)"><path d="M1.5 12.5v-8h2l1-1h3l1 1h3.5v2" stroke="#000" fill="#ffff80" stroke-width="1" /><path d="M1.5 12.5l3-5h11l-3.5 5z" stroke="#000" fill="#808000" stroke-width="1" /><path d="M9.5 2.5c1.5-2 4-2 5 0.5M14.7 .8v2.6h-2.6" stroke="#000" fill="none" stroke-width="1" /></g><g transform="translate(62,51)"><path d="M1.5 .5h13v13h-12l-1-1z" stroke="#000" fill="#808000" stroke-width="1" /><rect x="4" y="1" width="8" height="5" fill="#fff" stroke="none"/><rect x="4" y="8" width="8" height="5" fill="#000" stroke="none"/><rect x="9" y="9" width="2" height="3" fill="#fff" stroke="none"/><rect x="13" y="1" width="1" height="1" fill="#fff" stroke="none"/></g><path d="M84.5 50v18" stroke="#a0a0a0" stroke-width="1" shape-rendering="crispEdges"/><g transform="translate(93,51)"><path d="M.5 .5h7l3 3v9.5h-10z" stroke="#000" fill="#fff" stroke-width="1" /><path d="M7.5 .5v3h3" stroke="#000" fill="none" stroke-width="1" /><circle cx="8" cy="8" r="3.3" fill="#c8ffff" stroke="#808080" stroke-width="1.2"/><path d="M10.5 10.5l4 4" stroke="#000" fill="none" stroke-width="2" /></g><g transform="translate(116,51)"><path d="M4.5 5l2-4.5h8l-2 4.5" stroke="#000" fill="#fff" stroke-width="1" /><path d="M7 2.5h5M6.5 4h5" stroke="#000" fill="none" stroke-width="0.8" /><path d="M1.5 6.5l2-1.5h10l2 1.5v4.500l-2 2h-10l-2-2z" stroke="#000" fill="#fff" stroke-width="1" /><path d="M1.5 8.500h14M2 10.5h13M13.5 5.5v2" stroke="#000" fill="none" stroke-width="1" /><rect x="7" y="9" width="3" height="1" fill="#ffff00" stroke="none"/><path d="M3 13.500h10.500" stroke="#000" fill="none" stroke-width="1.5" /></g><g transform="translate(139,51)"><path d="M.5 .5h11v8h-11z" stroke="#000" fill="#fff" stroke-width="1" /><path d="M3 10.5h6M5.5 8.5v2" stroke="#000" fill="none" stroke-width="1" /><path d="M6.500 8l1.500-3.500h6l-1.5 3.500" stroke="#000" fill="#fff" stroke-width="1" /><path d="M4.500 9.5l1.500-1.500h8l1.5 1.500v2l-1.5 1.500h-8l-1.500-1.500z" stroke="#000" fill="#fff" stroke-width="1" /><path d="M4.500 10.500h11M6 13.500h8.5" stroke="#000" fill="none" stroke-width="1" /><path d="M5 14.5l-1 .5M14.5 14.5l1 .5" stroke="#000" fill="none" stroke-width="1" /></g><g transform="translate(162,51)"><path d="M3.500 .500h9v14h-9z" stroke="#000" fill="#fff" stroke-width="1.2" /><rect x="5" y="2" width="1" height="1" fill="#00f" stroke="none"/><rect x="7" y="2" width="4" height="1" fill="#00f" stroke="none"/><rect x="5" y="4" width="1" height="1" fill="#00f" stroke="none"/><rect x="7" y="4" width="2" height="1" fill="#00f" stroke="none"/><rect x="5" y="6" width="1" height="1" fill="#00f" stroke="none"/><rect x="7" y="6" width="3" height="1" fill="#00f" stroke="none"/><rect x="5" y="8" width="1" height="1" fill="#00f" stroke="none"/><rect x="7" y="8" width="2" height="1" fill="#00f" stroke="none"/><rect x="5" y="10" width="1" height="1" fill="#00f" stroke="none"/><rect x="7" y="10" width="4" height="1" fill="#00f" stroke="none"/><rect x="5" y="12" width="1" height="1" fill="#00f" stroke="none"/><rect x="7" y="12" width="2" height="1" fill="#00f" stroke="none"/></g><path d="M184.5 50v18" stroke="#a0a0a0" stroke-width="1" shape-rendering="crispEdges"/><g transform="translate(193,51)"><rect x="0" y="1" width="4" height="2.5" fill="#ff00ff" stroke="#000"/><rect x="7" y="3" width="4" height="4" fill="#008080" stroke="#000"/><rect x="11.5" y="5" width="2.5" height="2.5" fill="#800080" stroke="none"/><path d="M10 .5h5M15 .5l-3 3M12.500 .5h2.500v2.500" stroke="#000" fill="none" stroke-width="1" /><path d="M1.500 13.500v-7l4 2" stroke="#000" fill="#ffff80" stroke-width="1" /><path d="M1.500 13.500l4.500-5.500h9.500v2l-4 3.500z" stroke="#000" fill="#808000" stroke-width="1" /><path d="M1.5 6.500l4.500 1.500" stroke="#000" fill="none" stroke-width="1" /></g><path d="M215.5 50v18" stroke="#a0a0a0" stroke-width="1" shape-rendering="crispEdges"/><g transform="translate(224,51)"><text x="0" y="5.5" font-size="7" fill="#007070" font-family="Liberation Sans,sans-serif" font-weight="700">8</text><text x="7" y="10.5" font-size="7" fill="#007070" font-family="Liberation Sans,sans-serif" font-weight="700">9</text><text x="10" y="5.5" font-size="7" fill="#007070" font-family="Liberation Sans,sans-serif" font-weight="700" textLength="6.5" lengthAdjust="spacingAndGlyphs">12</text><path d="M2.500 14.500v-7.500M1 8.500l1.500-1.500l1.500 1.500M14.500 14.500v-7.500M13 8.500l1.500-1.500l1.500 1.500M9 11v3.500M7.500 13.5l1.500 1.500l1.500-1.500" stroke="#000" fill="none" stroke-width="1.1" /></g><g transform="translate(247,51)"><rect x="1" y="0" width="15" height="15" fill="#008000" stroke="none"/><rect x="1" y="0" width="15" height="7" fill="#00ffff" stroke="none"/><rect x="1" y="6" width="15" height="4" fill="#808000" stroke="none"/><rect x="1" y="0" width="4" height="2.5" fill="#ffff00" stroke="none"/><path d="M1 12l4.500-8l3.500 7" stroke="#000" fill="#fff" stroke-width="1" /><path d="M7 7l4-5l5 7" stroke="#000" fill="#fff" stroke-width="1" /><path d="M5 4l-1.500 4h4zM11 2l-1.500 3.5h3.500z" stroke="none" fill="#fff" stroke-width="1" /><path d="M3 9.5l2-5.5l2.500 4.500M9.500 5l1.500-3l2 3.500" stroke="#000" fill="none" stroke-width="0.9" /></g><path d="M269.5 50v18" stroke="#a0a0a0" stroke-width="1" shape-rendering="crispEdges"/><g transform="translate(278,51)"><circle cx="5.6" cy="6" r="5.3" fill="#fff" stroke="#000" stroke-width="1.3"/><path d="M3.0999999999999996 6h5" stroke="#000" fill="none" stroke-width="1.6" /><path d="M9.64763 10.04763l5 4" stroke="#000080" fill="none" stroke-width="2.4" /><path d="M10.547629999999998 10.04763l4.500 3.600" stroke="#00c0ff" fill="none" stroke-width="0.9" /></g><g transform="translate(301,51)"><circle cx="5.6" cy="6" r="5.3" fill="#fff" stroke="#000" stroke-width="1.3"/><path d="M3.0999999999999996 6h5" stroke="#000" fill="none" stroke-width="1.6" /><path d="M5.6 3.5v5" stroke="#000" fill="none" stroke-width="1.6" /><path d="M9.64763 10.04763l5 4" stroke="#000080" fill="none" stroke-width="2.4" /><path d="M10.547629999999998 10.04763l4.500 3.600" stroke="#00c0ff" fill="none" stroke-width="0.9" /></g><g transform="translate(324,51)"><path d="M7 .500h8.500v6.500h-4" stroke="#000" fill="none" stroke-width="1" /><circle cx="5.5" cy="7.5" r="5.2" fill="#fff" stroke="#000" stroke-width="1.3"/><path d="M3.0 7.5h5" stroke="#000" fill="none" stroke-width="1.6" /><path d="M5.5 5.0v5" stroke="#000" fill="none" stroke-width="1.6" /><path d="M9.47692 11.47692l5 4" stroke="#000080" fill="none" stroke-width="2.4" /><path d="M10.376919999999998 11.47692l4.500 3.600" stroke="#00c0ff" fill="none" stroke-width="0.9" /></g><g transform="translate(347,51)"><path d="M0 3v-2.5h3M13 .5h3v2.500M0 11.500v3h3M16 11.500v3h-3M.5 .5l2.500 2.500M15.500 .5l-2.500 2.500M.5 14.500l2.500-2.500" stroke="#000" fill="none" stroke-width="1.2" /><circle cx="7.8" cy="7.5" r="5" fill="#fff" stroke="#000" stroke-width="1.3"/><path d="M5.3 7.5h5" stroke="#000" fill="none" stroke-width="1.6" /><path d="M11.6355 11.3355l5 4" stroke="#000080" fill="none" stroke-width="2.4" /><path d="M12.535499999999999 11.3355l4.500 3.600" stroke="#00c0ff" fill="none" stroke-width="0.9" /></g><path d="M369.5 50v18" stroke="#a0a0a0" stroke-width="1" shape-rendering="crispEdges"/><g transform="translate(378,51)"><path d="M2 9.500l.5-5.500l5 4z" stroke="none" fill="#000080" stroke-width="1" /><path d="M5.500 6c2-2.500 5.500-2.500 7 0c1 2 .5 4-1.500 5" stroke="#000080" fill="none" stroke-width="1.7" /></g><g transform="translate(401,51)"><g transform="translate(16,0) scale(-1,1)"><path d="M2 9.500l.5-5.500l5 4z" stroke="none" fill="#a0a0a0" stroke-width="1" /><path d="M5.500 6c2-2.500 5.500-2.500 7 0c1 2 .5 4-1.500 5" stroke="#a0a0a0" fill="none" stroke-width="1.7" /></g></g><g transform="translate(424,51)"><path d="M2.500 1h8l3 3v10.500h-11z" stroke="#000" fill="#fff" stroke-width="1.8" /><path d="M10 1v3.500h3.500" stroke="#000" fill="none" stroke-width="1.2" /><rect x="3.5" y="3.7" width="6" height="1.8" fill="#f00" stroke="none"/><path d="M4 6h8" stroke="#000" fill="none" stroke-width="0.8" /><rect x="3.5" y="6.6" width="9.5" height="1.6" fill="#f00" stroke="none"/><path d="M4 9.500h8.500M4 11h8.500" stroke="#000" fill="none" stroke-width="0.9" /><rect x="3.5" y="11.8" width="9.5" height="1.5" fill="#f00" stroke="none"/></g><g transform="translate(447,51)"><path d="M1.500 .5h8l3 3v11h-11z" stroke="#a0a0a0" fill="#e4e4e4" stroke-width="1.3" /><rect x="1" y="6" width="12" height="3" fill="#a0a0a0" stroke="none"/><path d="M6.500 .5v14" stroke="#a0a0a0" fill="none" stroke-width="3" stroke-dasharray="1 1"/><path d="M9.500 .5v3h3" stroke="#a0a0a0" fill="none" stroke-width="1" /></g><g transform="translate(470,51)"><path d="M1.500 1h8l3 3v10.500h-11z" stroke="#a0a0a0" fill="#e4e4e4" stroke-width="1.3" /><path d="M1.500 3h11M1.5 12.500h11" stroke="#a0a0a0" fill="none" stroke-width="1.5" /><path d="M6.500 3v9" stroke="#a0a0a0" fill="none" stroke-width="3" stroke-dasharray="1 1"/></g><g transform="translate(493,51)"><path d="M5.500 0l3.500 9M10.500 0l-3.500 9" stroke="#a0a0a0" fill="none" stroke-width="1.3" /><ellipse cx="5.2" cy="11.5" rx="1.8" ry="2.3" fill="none" stroke="#a0a0a0" stroke-width="1.2"/><ellipse cx="10.8" cy="11.500" rx="1.8" ry="2.3" fill="none" stroke="#a0a0a0" stroke-width="1.2"/></g><g transform="translate(516,51)"><path d="M1.500 .5h5l2.500 2.500v6.500h-7.500z" stroke="#a0a0a0" fill="#f0f0f0" stroke-width="1.2" /><path d="M3 3.500h3M3 5.500h4.500M3 7.500h4.500" stroke="#a0a0a0" fill="none" stroke-width="1" /><path d="M7.500 4.500h5l2.500 2.500v6.500h-7.500z" stroke="#a0a0a0" fill="#f0f0f0" stroke-width="1.2" /><path d="M9 8.500h4.500M9 10.500h4.500M9 12.500h4.500" stroke="#a0a0a0" fill="none" stroke-width="1" /></g><g transform="translate(539,51)"><path d="M1.500 2.500h12v11h-12z" stroke="#a0a0a0" fill="#a0a0a0" stroke-width="1.5" stroke-linejoin="round"/><rect x="4.5" y="0.5" width="6" height="2.5" fill="#a0a0a0" stroke="none"/><path d="M5 3h5" stroke="#f0f0f0" fill="none" stroke-width="0.8" /><path d="M8.500 7.500h4.500l2 2v4.500h-6.500z" stroke="#a0a0a0" fill="#f0f0f0" stroke-width="1.2" /><path d="M10 10h3.5M10 12h3.500" stroke="#a0a0a0" fill="none" stroke-width="1" /></g><path d="M561.5 50v18" stroke="#a0a0a0" stroke-width="1" shape-rendering="crispEdges"/><g transform="translate(570,51)"><path d="M.5 .5l5.500 9v5M11 .5l-5 9M5 1.500h5M8.500 0l1.500 1.500l-1.500 1.500" stroke="#a0a0a0" fill="none" stroke-width="1.3" /><path d="M12 .5l2.500 2v12M12.500 8v6" stroke="#a0a0a0" fill="none" stroke-width="1.2" /></g><g transform="translate(593,51)"><path d="M4.500 1c3 4 5.500 8 5 13h-2" stroke="#000" fill="none" stroke-width="1.5" /><path d="M3.500 1.500l2.500-1.500" stroke="#f00" fill="none" stroke-width="1.5" /></g><g transform="translate(616,51)"><path d="M3.500 14h2.500c0-5 2-9.500 5.500-12.500" stroke="#000" fill="none" stroke-width="1.5" /><path d="M11 1l3 .8" stroke="#f00" fill="none" stroke-width="1.5" /></g><path d="M638.5 50v18" stroke="#a0a0a0" stroke-width="1" shape-rendering="crispEdges"/><g transform="translate(647,51)"><path d="M.5 .5v2h14v3" stroke="#a0a0a0" fill="none" stroke-width="1.2" /><path d="M5 6.500h10v7.500h-10z" stroke="#a0a0a0" fill="#f0f0f0" stroke-width="1.5" /><path d="M6.500 9h3M6.500 11h3" stroke="#a0a0a0" fill="none" stroke-width="1" /><rect x="10.5" y="8.5" width="3" height="3" fill="none" stroke="#a0a0a0"/></g><g transform="translate(670,51)"><rect x="0" y="0" width="7.5" height="5.5" fill="#a0a0a0" stroke="none"/><rect x="3" y="3" width="9" height="6.5" fill="#a0a0a0" stroke="none"/><rect x="7.5" y="7.5" width="8.5" height="6.5" fill="#a0a0a0" stroke="none"/></g><g transform="translate(693,51)"><rect x="0" y="0" width="7.5" height="5.5" fill="#a0a0a0" stroke="none"/><rect x="3" y="3" width="9" height="6.5" fill="#a0a0a0" stroke="none"/><rect x="7.5" y="7.5" width="8.5" height="6.5" fill="#a0a0a0" stroke="none"/></g><path d="M715.5 50v18" stroke="#a0a0a0" stroke-width="1" shape-rendering="crispEdges"/><g transform="translate(724,51)"><path d="M.5 10.500v3h15v2" stroke="#a0a0a0" fill="none" stroke-width="1.2" /><path d="M3 12l11-11M5 12l10.500-9" stroke="#a0a0a0" fill="none" stroke-width="1.1" /><path d="M3 9.500v2.500h2.500M11 1h3v3" stroke="#a0a0a0" fill="none" stroke-width="1.1" /></g><g transform="translate(747,51)"><path d="M8 0v15M5.500 2.500l2.500-2.500l2.500 2.500M5.500 12.500l2.500 2.500l2.500-2.500M0 8.500h16M2.500 6l-2.500 2.500l2.500 2.500M13.500 6l2.500 2.500l-2.500 2.500" stroke="#a0a0a0" fill="none" stroke-width="1.2" /><path d="M2 11l12-11M1 10.500h14v2" stroke="#a0a0a0" fill="none" stroke-width="1.1" /></g><g transform="translate(770,51)"><path d="M5 0v7M3 2l2-2l2 2M0 4.500h10M2 2.500l-2 2l2 2M8 2.500l2 2l-2 2" stroke="#a0a0a0" fill="none" stroke-width="1.1" /><path d="M5 7h10v7.500h-10z" stroke="#a0a0a0" fill="#f0f0f0" stroke-width="1.6" /><path d="M6.500 9.500h3M6.500 11.500h3" stroke="#a0a0a0" fill="none" stroke-width="1" /><rect x="10.5" y="9" width="3" height="3" fill="none" stroke="#a0a0a0"/></g><g transform="translate(793,51)"><rect x="0" y="0" width="5.5" height="5.5" fill="#a0a0a0" stroke="none"/><rect x="10.5" y="0.5" width="5" height="5" fill="none" stroke="#a0a0a0"/><path d="M5.500 6.500h6M9.500 5l2 1.500l-2 1.500" stroke="#a0a0a0" fill="none" stroke-width="1.1" /><text x="0.5" y="14.5" font-size="7" fill="#989898" font-family="Liberation Sans,sans-serif" font-weight="700" textLength="14.5" lengthAdjust="spacingAndGlyphs">180°</text></g><path d="M815.5 50v18" stroke="#a0a0a0" stroke-width="1" shape-rendering="crispEdges"/><g transform="translate(824,51)"><path d="M4 .5h2.500M6 .5l-3 9h-2.500M1.500 12v3M1 12h3M7 3l4 3M11 3v3.500h-3.500" stroke="#a0a0a0" fill="none" stroke-width="1.2" /><rect x="9" y="8.5" width="7" height="6.5" fill="#a0a0a0" stroke="none"/></g><g transform="translate(847,51)"><path d="M1 0v5.500h-1M6 .5h2.500M8 .5l-3 9h-2.500M3.500 12v3M3 12h3M9 3l4 3M13 3v3.500h-3.500" stroke="#a0a0a0" fill="none" stroke-width="1.2" /><rect x="11" y="8.5" width="3" height="6.5" fill="#a0a0a0" stroke="none"/></g><g transform="translate(870,51)"><path d="M0 7.500h16M8 5v5" stroke="#a0a0a0" fill="none" stroke-width="1.2" /></g><g transform="translate(893,51)"><path d="M1 1.500h2.500v-1.500M2.500 3.500v3c0 4 3 6 7 6h2.500M.5 5.500l2-2l2 2M10 10.500l2 2l-2 2M13 11v2.500h2.500" stroke="#a0a0a0" fill="none" stroke-width="1.2" /></g><g transform="translate(916,51)"><path d="M0 6.500h9M6 4l3 2.500l-3 2.500M0 10.500h6v2.500M11.500 4.500v2.500h4.500" stroke="#a0a0a0" fill="none" stroke-width="1.2" /></g><path d="M938.5 50v18" stroke="#a0a0a0" stroke-width="1" shape-rendering="crispEdges"/><g transform="translate(947,51)"><circle cx="4.5" cy="5" r="4" fill="none" stroke="#a0a0a0" stroke-width="1.2" stroke-dasharray="2 1"/><path d="M4.500 9v6M9.500 7v2.500h6.500" stroke="#a0a0a0" fill="none" stroke-width="1.2" /></g><g transform="translate(970,51)"><circle cx="7.5" cy="4.5" r="4" fill="none" stroke="#a0a0a0" stroke-width="1.2" stroke-dasharray="2 1"/><rect x="0" y="9.5" width="6" height="5.5" fill="#a0a0a0" stroke="none"/><rect x="10" y="10" width="5" height="5" fill="none" stroke="#a0a0a0"/><path d="M7.500 8.500v7" stroke="#a0a0a0" fill="none" stroke-width="1.2" stroke-dasharray="2 1"/></g><g transform="translate(993,51)"><circle cx="4.5" cy="4.5" r="4" fill="none" stroke="#a0a0a0" stroke-width="1.2" stroke-dasharray="2 1"/><rect x="10" y="0" width="6" height="5.5" fill="#a0a0a0" stroke="none"/><rect x="10.5" y="10" width="5" height="5" fill="none" stroke="#a0a0a0"/><path d="M4.500 8.500v6M9.500 7.500h7" stroke="#a0a0a0" fill="none" stroke-width="1.2" /></g><path d="M1015.5 50v18" stroke="#a0a0a0" stroke-width="1" shape-rendering="crispEdges"/><g transform="translate(1024,51)"><rect x="8.5" y="0.5" width="5" height="4" fill="none" stroke="#a0a0a0"/><path d="M.5 10.500v2h15v2" stroke="#a0a0a0" fill="none" stroke-width="1.2" /><path d="M10.500 6l-4.500 4.500M6 7.500v3h3" stroke="#a0a0a0" fill="none" stroke-width="1.1" /></g><g transform="translate(1047,51)"><rect x="8.5" y="0.5" width="5" height="4" fill="none" stroke="#a0a0a0"/><path d="M.5 10.500v2h15v2" stroke="#a0a0a0" fill="none" stroke-width="1.2" /></g><g transform="translate(1070,51)"><rect x="8.5" y="0.5" width="5" height="4" fill="none" stroke="#a0a0a0"/><path d="M.5 10.500v2h15v2" stroke="#a0a0a0" fill="none" stroke-width="1.2" /><path d="M10.500 6l-4.500 4.500M6 7.500v3h3" stroke="#a0a0a0" fill="none" stroke-width="1.1" /><text x="0" y="8" font-size="10" fill="#a0a0a0" font-family="Liberation Sans,sans-serif" font-weight="700">?</text></g><path d="M1092.5 50v18" stroke="#a0a0a0" stroke-width="1" shape-rendering="crispEdges"/><g transform="translate(1101,51)"><rect x="1" y="1" width="14" height="13" fill="none" stroke="#a0a0a0" stroke-dasharray="1 1"/><path d="M8 0v5M6 3l2 2.500l2-2.500M8 15v-5M6 12l2-2.500l2 2.500M1 7.500h4.500M3.500 5.500l2.500 2l-2.500 2M15 7.500h-4.500M12.500 5.500l-2.500 2l2.500 2" stroke="#a0a0a0" fill="none" stroke-width="1.1" /></g><path d="M1123.5 50v18" stroke="#a0a0a0" stroke-width="1" shape-rendering="crispEdges"/><g transform="translate(1132,51)"><path d="M9.500 0l-3 6.500l2 -1.500l2 3.500l-4 .5l2 3.500M5 12h7M6.500 12l2 2.500l2-2.500" stroke="#f00" fill="none" stroke-width="1.2" /></g><g transform="translate(1155,51)"><ellipse cx="5.5" cy="5.500" rx="5" ry="4.5" fill="none" stroke="#a0a0a0" stroke-width="1.1"/><ellipse cx="10.5" cy="5.500" rx="5" ry="4.5" fill="none" stroke="#a0a0a0" stroke-width="1.1"/><path d="M8 4v10.500M5.500 12.500l2.500 2l2.500-2M4.500 13h7M9 5.500c-2 0-2 2.500 0 2.500" stroke="#a0a0a0" fill="none" stroke-width="1.1" /></g><path d="M1177.5 50v18" stroke="#a0a0a0" stroke-width="1" shape-rendering="crispEdges"/><g transform="translate(1186,51)"><path d="M.5 -.5v12.500l3-3l2.500 5.500l2-1l-2.500-5.500h4.200z" stroke="none" fill="#000" stroke-width="1" /><text x="7.5" y="11.5" font-size="15.5" fill="#000080" font-weight="700" font-family="Liberation Serif,serif">?</text></g></svg><svg style="left:0;top:0" width="30" height="680" viewBox="0 0 30 680"><g transform="translate(6,91)"><path d="M4 0v8M0 4h8M.5 .5l7 7M7.500 .5l-7 7" stroke="#a0a0a0" fill="none" stroke-width="0.9" /><path d="M7 4.500l2-1.500l1 1l2-2h3.500v2.500M7.500 6l2 1.500" stroke="#a0a0a0" fill="none" stroke-width="1" /><text x="0" y="15" font-size="7" fill="#8c8c8c" font-family="Liberation Sans,sans-serif" textLength="15.5" lengthAdjust="spacingAndGlyphs" font-weight="700">FLEX</text></g><g transform="translate(6,113)"><path d="M0 .5h2.500v6.500h-2.500M2.500 0l3 3M6 .5l-3 3" stroke="#a0a0a0" fill="none" stroke-width="1" /><text x="4.5" y="8" font-size="7.5" fill="#a0a0a0" font-family="Liberation Sans,sans-serif" textLength="11" lengthAdjust="spacingAndGlyphs">20°</text><text x="0" y="15" font-size="7" fill="#8c8c8c" font-family="Liberation Sans,sans-serif" textLength="15.5" lengthAdjust="spacingAndGlyphs" font-weight="700">FLEX</text></g><g transform="translate(6,135)"><path d="M5 2.500c-5 0-5 5.500 0 5.500h10M8 .5l6 6M14 .5l-6 6M11 0v7.500M7.500 3.500h7.500" stroke="#a0a0a0" fill="none" stroke-width="1" /><text x="0" y="15" font-size="7" fill="#8c8c8c" font-family="Liberation Sans,sans-serif" textLength="15.5" lengthAdjust="spacingAndGlyphs" font-weight="700">FLEX</text></g><g transform="translate(6,157)"><path d="M0 2.500h5M2.500 0v5M1 1l3 3M7 .5l6 6M13 .5l-6 6M10 0v7.500M6.500 3.500h7.500M3 5.500c0 2 2 2.500 4 2.500M12 8h3.500" stroke="#a0a0a0" fill="none" stroke-width="1" /><text x="0" y="15" font-size="7" fill="#8c8c8c" font-family="Liberation Sans,sans-serif" textLength="15.5" lengthAdjust="spacingAndGlyphs" font-weight="700">FLEX</text></g><g transform="translate(6,179)"><path d="M4 0v8M0 4h8M.5 .5l7 7M7.500 .5l-7 7" stroke="#a0a0a0" fill="none" stroke-width="0.9" /><path d="M9 .5v8c0 4-3 5-8 5M11.500 .5v8c0 5-4 7-10.500 7M14 .5v8c0 4-2 6-4 6.500M.5 9.500h9M.5 9.500v5" stroke="#a0a0a0" fill="none" stroke-width="1" /></g><g transform="translate(6,201)"><path d="M4 0v8M0 4h8M.5 .5l7 7M7.500 .5l-7 7" stroke="#a0a0a0" fill="none" stroke-width="0.9" /><ellipse cx="8.5" cy="10" rx="7" ry="3" fill="none" stroke="#a0a0a0"/><ellipse cx="8" cy="12" rx="5" ry="2.500" fill="none" stroke="#a0a0a0"/></g><g transform="translate(6,223)"><path d="M6.500 2.500l9 9" stroke="#000" fill="none" stroke-width="2.6" /><path d="M6.500 2l2 2" stroke="#ffff00" fill="none" stroke-width="1.2" /><path d="M10.500 1.500h1M13 .5h1M14.500 2.500h1M12.500 3.500h1M15.500 5h.8" stroke="#f00" fill="none" stroke-width="1.2" /><path d="M0 12.500h11.500v2M1 11.500c2 0 3-1 3.500-3" stroke="#000" fill="none" stroke-width="1.2" /></g><path d="M5 245.5h19" stroke="#a0a0a0" stroke-width="1" shape-rendering="crispEdges"/><g transform="translate(6,253)"><path d="M4.500 0v8M0 4h9" stroke="#d0d000" fill="none" stroke-width="1" /><path d="M1 .5l7 7M8 .5l-7 7" stroke="#e8e830" fill="none" stroke-width="1" /><path d="M4.500 2.500v3M3 4h3" stroke="#fff" fill="none" stroke-width="1" /><text x="3.5" y="13" font-size="5" fill="#00f" font-family="Liberation Sans,sans-serif" font-weight="700" textLength="11" lengthAdjust="spacingAndGlyphs">40m</text><path d="M0 14.500h16" stroke="#000" fill="none" stroke-width="1.2" /></g><g transform="translate(6,275)"><path d="M4.500 0v8M0 4h9" stroke="#d0d000" fill="none" stroke-width="1" /><path d="M1 .5l7 7M8 .5l-7 7" stroke="#e8e830" fill="none" stroke-width="1" /><path d="M4.500 2.500v3M3 4h3" stroke="#fff" fill="none" stroke-width="1" /><path d="M10 6.500h6" stroke="#00f" fill="none" stroke-width="1.2" stroke-dasharray="1.500 1"/><path d="M1 9v5" stroke="#00f" fill="none" stroke-width="1.5" stroke-dasharray="1.5 1"/><path d="M3.500 8.500h12v5.500h-12z" stroke="#000" fill="none" stroke-width="1.2" /></g><path d="M5 297.5h19" stroke="#a0a0a0" stroke-width="1" shape-rendering="crispEdges"/><g transform="translate(6,305)"><path d="M4.500 0v8M0 4h9" stroke="#d0d000" fill="none" stroke-width="1" /><path d="M1 .5l7 7M8 .5l-7 7" stroke="#e8e830" fill="none" stroke-width="1" /><path d="M4.500 2.500v3M3 4h3" stroke="#fff" fill="none" stroke-width="1" /><path d="M.5 10v5M15.500 10v5M1.500 12.500h13M4.500 10l-3 2.500l3 2.500M11.500 10l3 2.500l-3 2.500" stroke="#000" fill="none" stroke-width="1.3" /></g><g transform="translate(6,327)"><path d="M4.500 0v8M0 4h9" stroke="#d0d000" fill="none" stroke-width="1" /><path d="M1 .5l7 7M8 .5l-7 7" stroke="#e8e830" fill="none" stroke-width="1" /><path d="M4.500 2.500v3M3 4h3" stroke="#fff" fill="none" stroke-width="1" /><rect x="7.5" y="10" width="8.5" height="5" fill="#808080" stroke="none"/><rect x="12" y="8" width="3" height="2" fill="#808080" stroke="none"/><path d="M13.500 3v5M12 3h3" stroke="#000" fill="none" stroke-width="1" /><path d="M13.500 4.500v2.500" stroke="#f0f" fill="none" stroke-width="1.6" /><path d="M.5 14.500h5" stroke="#c00000" fill="none" stroke-width="1.2" /></g><g transform="translate(6,349)"><path d="M4.500 0v8M0 4h9" stroke="#d0d000" fill="none" stroke-width="1" /><path d="M1 .5l7 7M8 .5l-7 7" stroke="#e8e830" fill="none" stroke-width="1" /><path d="M4.500 2.500v3M3 4h3" stroke="#fff" fill="none" stroke-width="1" /><text x="1.5" y="15" font-size="20" fill="#000080" font-weight="700" font-family="Liberation Serif,serif">A</text></g><g transform="translate(6,371)"><path d="M4.500 0v8M0 4h9" stroke="#d0d000" fill="none" stroke-width="1" /><path d="M1 .5l7 7M8 .5l-7 7" stroke="#e8e830" fill="none" stroke-width="1" /><path d="M4.500 2.500v3M3 4h3" stroke="#fff" fill="none" stroke-width="1" /><text x="8" y="7" font-size="7.5" fill="#000080" font-family="Liberation Sans,sans-serif" font-weight="700" textLength="7.5" lengthAdjust="spacingAndGlyphs">10</text><path d="M6.500 8.500h9.500" stroke="#000080" fill="none" stroke-width="1.3" /><path d="M11.500 8.500v6.500" stroke="#000080" fill="none" stroke-width="2" /></g><g transform="translate(6,393)"><path d="M4.500 0v8M0 4h9" stroke="#d0d000" fill="none" stroke-width="1" /><path d="M1 .5l7 7M8 .5l-7 7" stroke="#e8e830" fill="none" stroke-width="1" /><path d="M4.500 2.500v3M3 4h3" stroke="#fff" fill="none" stroke-width="1" /><path d="M4.500 10l5.500-5l6 5z" stroke="#000" fill="#f00" stroke-width="0.8" /><rect x="5.5" y="10" width="10" height="4.5" fill="#00ffff" stroke="#000"/><rect x="8" y="11.5" width="2" height="2" fill="#000" stroke="none"/><rect x="12" y="11.5" width="2" height="2" fill="#000" stroke="none"/></g><g transform="translate(6,415)"><path d="M4.500 0v8M0 4h9" stroke="#d0d000" fill="none" stroke-width="1" /><path d="M1 .5l7 7M8 .5l-7 7" stroke="#e8e830" fill="none" stroke-width="1" /><path d="M4.500 2.500v3M3 4h3" stroke="#fff" fill="none" stroke-width="1" /><path d="M1.500 11l3-2.500l4 1.500h6v4h-13z" stroke="#000" fill="#00e800" stroke-width="0.7" /><circle cx="12.7" cy="5.500" r="2.900" fill="#ff00ff" stroke="#000" stroke-width=".5"/><path d="M3 13l1.500-3.500l1.500 5.500l2-3l1 2.500h4" stroke="#00f" fill="none" stroke-width="1.1" /></g><g transform="translate(6,437)"><path d="M4.500 0v8M0 4h9" stroke="#d0d000" fill="none" stroke-width="1" /><path d="M1 .5l7 7M8 .5l-7 7" stroke="#e8e830" fill="none" stroke-width="1" /><path d="M4.500 2.500v3M3 4h3" stroke="#fff" fill="none" stroke-width="1" /><path d="M11.500 .5v7" stroke="#000" fill="none" stroke-width="1" /><circle cx="11.500" cy="10.500" r="3.800" fill="#f00" stroke="#000" stroke-width=".8"/></g><g transform="translate(6,459)"><path d="M4.500 0v8M0 4h9" stroke="#d0d000" fill="none" stroke-width="1" /><path d="M1 .5l7 7M8 .5l-7 7" stroke="#e8e830" fill="none" stroke-width="1" /><path d="M4.500 2.500v3M3 4h3" stroke="#fff" fill="none" stroke-width="1" /><path d="M2.500 14v-3.500h8v-5h4" stroke="#008000" fill="none" stroke-width="1.5" /><rect x="1.5" y="13" width="2" height="2" fill="#f00" stroke="none"/><rect x="13.5" y="4.5" width="2" height="2" fill="#f00" stroke="none"/></g><g transform="translate(6,481)"><path d="M4.500 0v8M0 4h9" stroke="#d0d000" fill="none" stroke-width="1" /><path d="M1 .5l7 7M8 .5l-7 7" stroke="#e8e830" fill="none" stroke-width="1" /><path d="M4.500 2.500v3M3 4h3" stroke="#fff" fill="none" stroke-width="1" /><path d="M.5 8.500l4 2.500h7l4-5.500v9h-15z" stroke="#000" fill="#e8e800" stroke-width="1" /><path d="M1 12.500h14" stroke="#404000" fill="none" stroke-width="1" stroke-dasharray="1 1"/></g><g transform="translate(6,503)"><rect x="0" y="0" width="16" height="15" fill="#00e0e0" stroke="#000"/><rect x="0.5" y="10" width="15" height="4.5" fill="#008000" stroke="none"/><circle cx="9" cy="3" r="2" fill="#ffff00"/><path d="M.5 13l4.500-7l4 7z" stroke="none" fill="#909090" stroke-width="1" /><path d="M8 13l5-9l2.500 4v5z" stroke="none" fill="#c8c8c8" stroke-width="1" /><path d="M.5 .5h15v14h-15z" stroke="#000" fill="none" stroke-width="1.2" /></g><g transform="translate(6,525)"><path d="M.5 7.500l6-4v8z" stroke="#a0a0a0" fill="#f0f0f0" stroke-width="1" /><path d="M6.500 7.500l9-7v14z" stroke="#a0a0a0" fill="#a0a0a0" stroke-width="1" /><path d="M11 5h5M11 10h5" stroke="#a0a0a0" fill="none" stroke-width="1.5" /></g><g transform="translate(6,547)"><rect x="3" y="1" width="3.5" height="13" fill="#000" stroke="none"/><path d="M4.700 1.500v12" stroke="#fff" fill="none" stroke-width="1" stroke-dasharray="1 1.500"/><path d="M7 12l8.500-7M7 14.500l8.500-7M7 9l6-5" stroke="#000" fill="none" stroke-width="1.4" /><path d="M0 13l16-13M0 15l16-13" stroke="#f00" fill="none" stroke-width="1" /></g><g transform="translate(6,569)"><rect x="3" y="0" width="4.5" height="15" fill="#000" stroke="none"/><path d="M4.500 1v13" stroke="#fff" fill="none" stroke-width="1" stroke-dasharray="1 1.5"/><rect x="3" y="0" width="10.5" height="1.8" fill="#000" stroke="none"/><rect x="7" y="6" width="5.5" height="1.6" fill="#000" stroke="none"/></g><path d="M5 591.5h19" stroke="#a0a0a0" stroke-width="1" shape-rendering="crispEdges"/><g transform="translate(6,599)"><path d="M0 1.500h16M0 14.500h16M.5 14.500v-3M6.500 0v13M4 5l2.500-2.500l2.500 2.500M4 10l2.500 2.500l2.500-2.500" stroke="#a0a0a0" fill="none" stroke-width="1.1" /></g><g transform="translate(6,621)"><path d="M0 .5h16M11 14.500h5M13.500 2v12M11 5l2.500-2.500l2.500 2.500M11 11.500l2.500 2.500l2.500-2.500" stroke="#a0a0a0" fill="none" stroke-width="1.1" /><text x="0" y="5.5" font-size="5" fill="#a0a0a0" font-family="Liberation Sans,sans-serif" font-weight="700" textLength="10" lengthAdjust="spacingAndGlyphs">40m</text></g></svg><div class="abs" style="left:32px;top:682px;width:23px;height:21px;background:#c2dcf3;border:1px solid #92c0e8"></div><div class="abs" style="left:36px;top:685px;width:15px;height:15px;background:#c0c0c0;border-right:1px solid #000;border-bottom:1px solid #000"></div><div class="t" style="left:40.5px;top:687.2px;width:6px;text-align:center;font-size:11.5px;color:#00f">1</div><div class="abs" style="left:55px;top:682px;width:23px;height:21px;background:#c2dcf3;border:1px solid #92c0e8"></div><div class="abs" style="left:59px;top:685px;width:15px;height:15px;background:#c0c0c0;border-right:1px solid #000;border-bottom:1px solid #000"></div><div class="t" style="left:56px;top:687.2px;width:21px;text-align:center;font-size:11.5px;color:#00f;">2</div><div class="abs" style="left:78px;top:682px;width:23px;height:21px;background:#c2dcf3;border:1px solid #92c0e8"></div><div class="abs" style="left:82px;top:685px;width:15px;height:15px;background:#c0c0c0;border-right:1px solid #000;border-bottom:1px solid #000"></div><div class="t" style="left:79px;top:687.2px;width:21px;text-align:center;font-size:11.5px;color:#00f;">3</div><div class="abs" style="left:101px;top:682px;width:23px;height:21px;background:#c2dcf3;border:1px solid #92c0e8"></div><div class="abs" style="left:105px;top:685px;width:15px;height:15px;background:#c0c0c0;border-right:1px solid #000;border-bottom:1px solid #000"></div><div class="t" style="left:102px;top:687.2px;width:21px;text-align:center;font-size:11.5px;color:#00f;">4</div><div class="abs" style="left:124px;top:682px;width:23px;height:21px;background:#c2dcf3;border:1px solid #92c0e8"></div><div class="abs" style="left:128px;top:685px;width:15px;height:15px;background:#c0c0c0;border-right:1px solid #000;border-bottom:1px solid #000"></div><div class="t" style="left:125px;top:687.2px;width:21px;text-align:center;font-size:11.5px;color:#00f;">5</div><div class="abs" style="left:147px;top:682px;width:23px;height:21px;background:#c2dcf3;border:1px solid #92c0e8"></div><div class="abs" style="left:151px;top:685px;width:15px;height:15px;background:#c0c0c0;border-right:1px solid #000;border-bottom:1px solid #000"></div><div class="t" style="left:148px;top:687.2px;width:21px;text-align:center;font-size:11.5px;color:#00f;">6</div><div class="abs" style="left:170px;top:682px;width:23px;height:21px;background:#c2dcf3;border:1px solid #92c0e8"></div><div class="abs" style="left:174px;top:685px;width:15px;height:15px;background:#c0c0c0;border-right:1px solid #000;border-bottom:1px solid #000"></div><div class="t" style="left:171px;top:687.2px;width:21px;text-align:center;font-size:11.5px;color:#00f;">7</div><div class="abs" style="left:193px;top:682px;width:23px;height:21px;background:#c2dcf3;border:1px solid #92c0e8"></div><div class="abs" style="left:197px;top:685px;width:15px;height:15px;background:#c0c0c0;border-right:1px solid #000;border-bottom:1px solid #000"></div><div class="t" style="left:194px;top:687.2px;width:21px;text-align:center;font-size:11.5px;color:#00f;">8</div><div class="abs" style="left:216px;top:682px;width:23px;height:21px;background:#c2dcf3;border:1px solid #92c0e8"></div><div class="abs" style="left:220px;top:685px;width:15px;height:15px;background:#c0c0c0;border-right:1px solid #000;border-bottom:1px solid #000"></div><div class="t" style="left:217px;top:687.2px;width:21px;text-align:center;font-size:11.5px;color:#00f;">9</div><div class="abs" style="left:239px;top:682px;width:23px;height:21px;background:#c2dcf3;border:1px solid #92c0e8"></div><div class="abs" style="left:243px;top:685px;width:15px;height:15px;background:#c0c0c0;border-right:1px solid #000;border-bottom:1px solid #000"></div><div class="t" style="left:240px;top:687.2px;width:21px;text-align:center;font-size:11.5px;color:#00f;letter-spacing:-1px;text-indent:-1px;">10</div><div class="abs" style="left:262px;top:682px;width:23px;height:21px;background:#c2dcf3;border:1px solid #92c0e8"></div><div class="abs" style="left:266px;top:685px;width:15px;height:15px;background:#c0c0c0;border-right:1px solid #000;border-bottom:1px solid #000"></div><div class="t" style="left:263px;top:687.2px;width:21px;text-align:center;font-size:11.5px;color:#00f;letter-spacing:-1px;text-indent:-1px;">11</div><div class="abs" style="left:285px;top:682px;width:23px;height:21px;background:#c2dcf3;border:1px solid #92c0e8"></div><div class="abs" style="left:289px;top:685px;width:15px;height:15px;background:#c0c0c0;border-right:1px solid #000;border-bottom:1px solid #000"></div><div class="t" style="left:286px;top:687.2px;width:21px;text-align:center;font-size:11.5px;color:#00f;letter-spacing:-1px;text-indent:-1px;">12</div><div class="abs" style="left:308px;top:682px;width:23px;height:21px;background:#c2dcf3;border:1px solid #92c0e8"></div><div class="abs" style="left:312px;top:685px;width:15px;height:15px;background:#c0c0c0;border-right:1px solid #000;border-bottom:1px solid #000"></div><div class="t" style="left:309px;top:687.2px;width:21px;text-align:center;font-size:11.5px;color:#00f;letter-spacing:-1px;text-indent:-1px;">13</div><div class="abs" style="left:331px;top:682px;width:23px;height:21px;background:#c2dcf3;border:1px solid #92c0e8"></div><div class="abs" style="left:335px;top:685px;width:15px;height:15px;background:#c0c0c0;border-right:1px solid #000;border-bottom:1px solid #000"></div><div class="t" style="left:332px;top:687.2px;width:21px;text-align:center;font-size:11.5px;color:#00f;letter-spacing:-1px;text-indent:-1px;">14</div><div class="abs" style="left:354px;top:682px;width:23px;height:21px;background:#c2dcf3;border:1px solid #92c0e8"></div><div class="abs" style="left:358px;top:685px;width:15px;height:15px;background:#c0c0c0;border-right:1px solid #000;border-bottom:1px solid #000"></div><div class="t" style="left:355px;top:687.2px;width:21px;text-align:center;font-size:11.5px;color:#00f;letter-spacing:-1px;text-indent:-1px;">15</div><div class="abs" style="left:377px;top:682px;width:23px;height:21px;background:#c2dcf3;border:1px solid #92c0e8"></div><div class="abs" style="left:381px;top:685px;width:15px;height:15px;background:#c0c0c0;border-right:1px solid #000;border-bottom:1px solid #000"></div><div class="t" style="left:378px;top:687.2px;width:21px;text-align:center;font-size:11.5px;color:#00f;letter-spacing:-1px;text-indent:-1px;">16</div><div class="abs" style="left:400px;top:682px;width:23px;height:21px;background:#c2dcf3;border:1px solid #92c0e8"></div><div class="abs" style="left:404px;top:685px;width:15px;height:15px;background:#c0c0c0;border-right:1px solid #000;border-bottom:1px solid #000"></div><div class="t" style="left:401px;top:687.2px;width:21px;text-align:center;font-size:11.5px;color:#00f;letter-spacing:-1px;text-indent:-1px;">17</div><div class="abs" style="left:423px;top:682px;width:23px;height:21px;background:#c2dcf3;border:1px solid #92c0e8"></div><div class="abs" style="left:427px;top:685px;width:15px;height:15px;background:#c0c0c0;border-right:1px solid #000;border-bottom:1px solid #000"></div><div class="t" style="left:424px;top:687.2px;width:21px;text-align:center;font-size:11.5px;color:#00f;letter-spacing:-1px;text-indent:-1px;">18</div><div class="abs" style="left:446px;top:682px;width:23px;height:21px;background:#c2dcf3;border:1px solid #92c0e8"></div><div class="abs" style="left:450px;top:685px;width:15px;height:15px;background:#c0c0c0;border-right:1px solid #000;border-bottom:1px solid #000"></div><div class="t" style="left:447px;top:687.2px;width:21px;text-align:center;font-size:11.5px;color:#00f;letter-spacing:-1px;text-indent:-1px;">19</div><div class="abs" style="left:469px;top:682px;width:23px;height:21px;background:#c2dcf3;border:1px solid #92c0e8"></div><div class="abs" style="left:473px;top:685px;width:15px;height:15px;background:#c0c0c0;border-right:1px solid #000;border-bottom:1px solid #000"></div><div class="t" style="left:470px;top:687.2px;width:21px;text-align:center;font-size:11.5px;color:#00f;letter-spacing:-1px;text-indent:-1px;">20</div><div class="abs" style="left:492px;top:682px;width:23px;height:21px;background:#c2dcf3;border:1px solid #92c0e8"></div><div class="abs" style="left:496px;top:685px;width:15px;height:15px;background:#c0c0c0;border-right:1px solid #000;border-bottom:1px solid #000"></div><div class="t" style="left:493px;top:687.2px;width:21px;text-align:center;font-size:11.5px;color:#00f;letter-spacing:-1px;text-indent:-1px;">21</div><div class="abs" style="left:515px;top:682px;width:23px;height:21px;background:#c2dcf3;border:1px solid #92c0e8"></div><div class="abs" style="left:519px;top:685px;width:15px;height:15px;background:#c0c0c0;border-right:1px solid #000;border-bottom:1px solid #000"></div><div class="t" style="left:516px;top:687.2px;width:21px;text-align:center;font-size:11.5px;color:#00f;letter-spacing:-1px;text-indent:-1px;">22</div><div class="abs" style="left:538px;top:682px;width:23px;height:21px;background:#c2dcf3;border:1px solid #92c0e8"></div><div class="abs" style="left:542px;top:685px;width:15px;height:15px;background:#c0c0c0;border-right:1px solid #000;border-bottom:1px solid #000"></div><div class="t" style="left:539px;top:687.2px;width:21px;text-align:center;font-size:11.5px;color:#00f;letter-spacing:-1px;text-indent:-1px;">23</div><div class="abs" style="left:561px;top:682px;width:23px;height:21px;background:#c2dcf3;border:1px solid #92c0e8"></div><div class="abs" style="left:565px;top:685px;width:15px;height:15px;background:#c0c0c0;border-right:1px solid #000;border-bottom:1px solid #000"></div><div class="t" style="left:562px;top:687.2px;width:21px;text-align:center;font-size:11.5px;color:#00f;letter-spacing:-1px;text-indent:-1px;">24</div><div class="abs" style="left:584px;top:682px;width:23px;height:21px;background:#c2dcf3;border:1px solid #92c0e8"></div><div class="abs" style="left:588px;top:685px;width:15px;height:15px;background:#c0c0c0;border-right:1px solid #000;border-bottom:1px solid #000"></div><div class="t" style="left:585px;top:687.2px;width:21px;text-align:center;font-size:11.5px;color:#00f;letter-spacing:-1px;text-indent:-1px;">25</div><div class="abs" style="left:607px;top:682px;width:23px;height:21px;background:#c2dcf3;border:1px solid #92c0e8"></div><div class="abs" style="left:611px;top:685px;width:15px;height:15px;background:#c0c0c0;border-right:1px solid #000;border-bottom:1px solid #000"></div><div class="t" style="left:608px;top:687.2px;width:21px;text-align:center;font-size:11.5px;color:#00f;letter-spacing:-1px;text-indent:-1px;">26</div><div class="abs" style="left:630px;top:682px;width:23px;height:21px;background:#c2dcf3;border:1px solid #92c0e8"></div><div class="abs" style="left:634px;top:685px;width:15px;height:15px;background:#c0c0c0;border-right:1px solid #000;border-bottom:1px solid #000"></div><div class="t" style="left:631px;top:687.2px;width:21px;text-align:center;font-size:11.5px;color:#00f;letter-spacing:-1px;text-indent:-1px;">27</div><div class="abs" style="left:653px;top:682px;width:23px;height:21px;background:#c2dcf3;border:1px solid #92c0e8"></div><div class="abs" style="left:657px;top:685px;width:15px;height:15px;background:#c0c0c0;border-right:1px solid #000;border-bottom:1px solid #000"></div><div class="t" style="left:654px;top:687.2px;width:21px;text-align:center;font-size:11.5px;color:#00f;letter-spacing:-1px;text-indent:-1px;">28</div><div class="abs" style="left:676px;top:682px;width:23px;height:21px;background:#c2dcf3;border:1px solid #92c0e8"></div><div class="abs" style="left:680px;top:685px;width:15px;height:15px;background:#c0c0c0;border-right:1px solid #000;border-bottom:1px solid #000"></div><div class="t" style="left:677px;top:687.2px;width:21px;text-align:center;font-size:11.5px;color:#00f;letter-spacing:-1px;text-indent:-1px;">29</div><div class="abs" style="left:699px;top:682px;width:23px;height:21px;background:#c2dcf3;border:1px solid #92c0e8"></div><div class="abs" style="left:703px;top:685px;width:15px;height:15px;background:#c0c0c0;border-right:1px solid #000;border-bottom:1px solid #000"></div><div class="t" style="left:700px;top:687.2px;width:21px;text-align:center;font-size:11.5px;color:#00f;letter-spacing:-1px;text-indent:-1px;">30</div><svg style="left:0;top:679px" width="1366" height="28" viewBox="0 679 1366 28"><path d="M36.300 694.300l4.400 4.400M40.700 694.300l-4.400 4.400" stroke="#000" fill="none" stroke-width="1.2" /><rect x="243" y="685" width="4" height="3.6" fill="#000" stroke="none"/><path d="M724.5 684v18" stroke="#a0a0a0" stroke-width="1" shape-rendering="crispEdges"/><path d="M801.5 684v18" stroke="#a0a0a0" stroke-width="1" shape-rendering="crispEdges"/><path d="M832.5 684v18" stroke="#a0a0a0" stroke-width="1" shape-rendering="crispEdges"/></svg><div class="abs" style="left:730px;top:682px;width:23px;height:21px;background:#c2dcf3;border:1px solid #92c0e8"></div><svg style="left:0;top:679px" width="1366" height="28" viewBox="0 679 1366 28"><g transform="translate(733,685)"><path d="M3.5 0.5h10.500l-3.500 3.200h-10.500z" stroke="#000" fill="#fff" stroke-width="1.15" /><path d="M3.5 3h10.500l-3.500 3.200h-10.500z" stroke="#000" fill="#008000" stroke-width="1.15" /><path d="M3.5 5.5h10.500l-3.500 3.200h-10.500z" stroke="#000" fill="#f00" stroke-width="1.15" /><path d="M3.5 8h10.500l-3.500 3.200h-10.500z" stroke="#000" fill="#ffff00" stroke-width="1.15" /><path d="M3.5 10.5h10.500l-3.500 3.200h-10.500z" stroke="#000" fill="#0000ff" stroke-width="1.15" /></g><g transform="translate(756,685)"><path d="M4 .5h9l-3 3h-9z" stroke="#a0a0a0" fill="none" stroke-width="1" /><path d="M4 5h11l-3.500 4h-11z" stroke="#000" fill="#f00" stroke-width="1" /><path d="M4 11h9l-3 3h-9zM9 10h7M11 12.500h5" stroke="#a0a0a0" fill="none" stroke-width="1" /></g><g transform="translate(779,685)"><path d="M4 .5h11l-3.500 4h-11z" stroke="#a0a0a0" fill="#a0a0a0" stroke-width="1" /><path d="M4 10.500h11l-3.500 4h-11z" stroke="#a0a0a0" fill="#f0f0f0" stroke-width="1" /><path d="M8 5v5M6 8.500h4" stroke="#a0a0a0" fill="none" stroke-width="1" /></g><g transform="translate(810,685)"><path d="M3.5 1h10.500l-3.500 3.200h-10.500z" stroke="#000" fill="#00ffff" stroke-width="1.15" /><path d="M3.5 4.5h10.500l-3.500 3.200h-10.500z" stroke="#000" fill="#ffff00" stroke-width="1.15" /><path d="M3.5 8h10.500l-3.500 3.200h-10.500z" stroke="#000" fill="#fff" stroke-width="1.15" /><text x="10.5" y="15.5" font-size="10.5" fill="#00f" font-family="Liberation Sans,sans-serif" font-weight="700">?</text></g><g transform="translate(841,685)"><path d="M.5 1.500q0-1 1-1h13q1 0 1 1v12q0 1-1 1h-13q-1 0-1-1z" stroke="#a0a0a0" fill="none" stroke-width="1" /><path d="M2.500 2.500h11v10h-11z" stroke="#a0a0a0" fill="none" stroke-width="1" /><text x="5.2" y="11.2" font-size="10" fill="#a0a0a0" font-family="Liberation Sans,sans-serif" font-weight="700">1</text></g><g transform="translate(864,685)"><path d="M.5 1.500q0-1 1-1h13q1 0 1 1v12q0 1-1 1h-13q-1 0-1-1z" stroke="#a0a0a0" fill="none" stroke-width="1" /><path d="M2.500 2.500h11v10h-11z" stroke="#a0a0a0" fill="none" stroke-width="1" /><text x="5.2" y="11.2" font-size="10" fill="#a0a0a0" font-family="Liberation Sans,sans-serif" font-weight="700">2</text></g><g transform="translate(887,685)"><path d="M.5 1.500q0-1 1-1h13q1 0 1 1v12q0 1-1 1h-13q-1 0-1-1z" stroke="#a0a0a0" fill="none" stroke-width="1" /><path d="M2.500 2.500h11v10h-11z" stroke="#a0a0a0" fill="none" stroke-width="1" /><text x="5.2" y="11.2" font-size="10" fill="#a0a0a0" font-family="Liberation Sans,sans-serif" font-weight="700">3</text></g><g transform="translate(910,685)"><path d="M.5 1.500q0-1 1-1h13q1 0 1 1v12q0 1-1 1h-13q-1 0-1-1z" stroke="#a0a0a0" fill="none" stroke-width="1" /><path d="M2.500 2.500h11v10h-11z" stroke="#a0a0a0" fill="none" stroke-width="1" /><text x="5.2" y="11.2" font-size="10" fill="#a0a0a0" font-family="Liberation Sans,sans-serif" font-weight="700">4</text></g><g transform="translate(933,685)"><path d="M.5 1.500q0-1 1-1h13q1 0 1 1v12q0 1-1 1h-13q-1 0-1-1z" stroke="#a0a0a0" fill="none" stroke-width="1" /><path d="M2.500 2.500h11v10h-11z" stroke="#a0a0a0" fill="none" stroke-width="1" /><text x="5.2" y="11.2" font-size="10" fill="#a0a0a0" font-family="Liberation Sans,sans-serif" font-weight="700">5</text></g></svg><div class="abs" style="left:0px;top:728px;width:1366px;height:40px;background:#04060c;"></div><div class="abs" style="left:48px;top:728px;width:344px;height:40px;background:#353535;"></div><div class="abs" style="left:687px;top:728px;width:48px;height:40px;background:#33363b;"></div><div class="abs" style="left:642px;top:766px;width:40px;height:2px;background:#76b9ed;"></div><div class="abs" style="left:687px;top:766px;width:48px;height:2px;background:#76b9ed;"></div><div class="abs" style="left:1362px;top:728px;width:1px;height:40px;background:#3c3c3c;"></div><div class="t" style="left:60.00px;top:741.20px;font-size:15px;color:#a6a6a6;transform-origin:0 0;transform:scaleX(0.9762);">Ricerca in Windows e nel Web</div><div class="t" style="left:1308.90px;top:733.04px;font-size:12px;color:#fff;transform-origin:0 0;transform:scaleX(0.8658);">18:16</div><div class="t" style="left:1292.00px;top:750.04px;font-size:12px;color:#fff;transform-origin:0 0;transform:scaleX(0.9657);">26/04/2016</div><svg style="left:0;top:728px" width="1366" height="40" viewBox="0 728 1366 40"><path d="M16 742.300l6.500-.9v6.300h-6.500zM23.300 741.300l8.700-1.300v7.700h-8.700zM16 748.500h6.500v6.300l-6.500-.9zM23.300 748.500h8.700v7.700l-8.700-1.300z" stroke="none" fill="#fff" stroke-width="1" /><path d="M410.500 741.500h11v13h-11z" stroke="#fff" fill="none" stroke-width="1.2" /><path d="M408.500 743.500h-2v9h2M423.500 743.500h2v9h-2" stroke="#fff" fill="none" stroke-width="1.2" /><path d="M456.500 748c0-6 4.500-11 10.500-11c6 0 9.500 4.500 9.500 10.500v1.500h-13.500c.5 3 3 4.800 6.500 4.800c2.500 0 4.500-.6 6.300-1.600v4.300c-2 1.200-4.500 1.800-7.300 1.800c-6.500 0-10.500-4-10.500-9.800c0-3.500 1.700-6.600 4.500-8.300c-1.500 1.500-2.300 3.500-2.500 5.500h8.500c0-3-1.500-4.700-4.200-4.700c-3.800 0-7 3-7.800 7z" stroke="none" fill="#0078d7" stroke-width="1" /><rect x="504" y="739" width="21.5" height="17.5" fill="#f5d36b" stroke="none"/><rect x="504" y="739" width="8" height="2.5" fill="#e0b84a" stroke="none"/><path d="M504 743h21.500v13.500h-21.500z" stroke="none" fill="#fbe08a" stroke-width="1" /><path d="M507.500 756.500v-7.500h14v7.500h-4v-4h-6v4z" stroke="none" fill="#2ea3e8" stroke-width="1" /><rect x="505" y="740" width="4" height="1" fill="#4aa8e0" stroke="none"/><path d="M553 743.500l21-3v17l-21-3z" stroke="none" fill="#fff" stroke-width="1" /><path d="M559 742.500c0-4 2-5.500 4-5.500s4 1.500 4 4.500" stroke="#fff" fill="none" stroke-width="1.2" /><path d="M556 746.500l7-.7v4.500h-7zM564 745.700l7-.8v5.400h-7zM556 751.200h7v4.300l-7-.6zM564 751.200h7v5l-7-.7z" stroke="none" fill="#04060c" stroke-width="1" /><path d="M603.500 749c0-5.500 4-9.500 9.500-9.500c5.500 0 9 3.800 9 9.300v1.400h-12.500c.4 2.600 2.300 4 5 4c2.300 0 4-.9 5-2.500h2.300c-1.300 3.800-4.300 6-8.500 6c-5.800 0-9.800-3.500-9.800-8.700zM609.500 747h7c-.3-2.500-1.700-3.800-3.500-3.800s-3.200 1.300-3.500 3.800z" stroke="none" fill="#35b5f0" stroke-width="1" fill-rule="evenodd"/><ellipse cx="613" cy="747.5" rx="12.5" ry="5" fill="none" stroke="#f2c218" stroke-width="1.700" transform="rotate(-32 613 747.500)" stroke-dasharray="27 14 40"/><circle cx="661.8" cy="748" r="11" fill="#db4437"/><path d="M661.8 748L652.27 742.5A11 11 0 0 0 661.3 759L666.3 750z" stroke="none" fill="#0f9d58" stroke-width="1" /><path d="M661.8 748L672.3 744.8A11 11 0 0 1 661.3 759L666.3 750z" stroke="none" fill="#ffcd40" stroke-width="1" /><path d="M652.27 742.5A11 11 0 0 1 672.3 744.8L661.8 744.8z" stroke="none" fill="#db4437" stroke-width="1" /><circle cx="661.8" cy="748" r="5" fill="#f1f1f1"/><circle cx="661.8" cy="748" r="4" fill="#4285f4"/><g transform="translate(699.500,736.500) scale(1.5)"><path d="M0 6.500L2.500 4.300L6 3.800L11.500 1.800L14 -.3L15.700 .3L12.700 4.300L7 6L3 7.600L1 8.200z" stroke="none" fill="#1414d8" stroke-width="1" /><path d="M.8 7.300l2.200-.9M3.500 5.500l4-.6l5-2.200M13.500 1.200l1.500-1.200" stroke="#f0e800" fill="none" stroke-width="0.9" /><rect x="9.3" y="5" width="6.7" height="5.3" fill="#fff" stroke="none"/><text x="9.5" y="10.2" font-size="7" fill="#00f" font-family="Liberation Sans,sans-serif" font-weight="700" textLength="6.300" lengthAdjust="spacingAndGlyphs">12</text><path d="M1.500 9.300h7M1.500 11.400h14M1.500 13.600h14M1.500 15.700h14" stroke="#000" fill="none" stroke-width="1" /><path d="M4 10.400h2.500M1.800 12.500h3M6.500 12.300l2.500-.8M4.500 14.700l3-1M9 14.600h2.500M5.500 15.200l1.500-.5" stroke="#f00" fill="none" stroke-width="1.2" /></g><path d="M1168 750.500l6-5.500l6 5.500" stroke="#fff" fill="none" stroke-width="1.3" /><path d="M1196.500 744.500h9.500v8h-10" stroke="#b0b0b0" fill="none" stroke-width="1" /><path d="M1206.500 747v3" stroke="#b0b0b0" fill="none" stroke-width="1.2" /><path d="M1198.500 746.500l4 4M1202.500 746.500l-4 4" stroke="#fff" fill="none" stroke-width="1.1" /><path d="M1191 742v2.500M1194 742v2.500M1190 745h5v2.500c0 1.500-1 2-2.500 2v3.500" stroke="#fff" fill="none" stroke-width="1.1" /><path d="M1217 755a12.500 12.500 0 0 1 12.500-12.500M1220.300 755a9.200 9.200 0 0 1 9.200-9.200M1223.600 755a5.900 5.900 0 0 1 5.900-5.900" stroke="#b8b8b8" fill="none" stroke-width="1.2" /><rect x="1226.5" y="752" width="3" height="3" fill="#fff" stroke="none"/><path d="M1238.500 745.500h3l4.500-4v13l-4.500-4h-3z" stroke="#fff" fill="none" stroke-width="1.1" /><path d="M1248 745c1.300 1.500 1.300 4.500 0 6M1250.300 743c2.300 2.500 2.300 7.500 0 10M1252.600 741c3.300 3.800 3.300 10.200 0 14" stroke="#fff" fill="none" stroke-width="1" /><path d="M1262 740h16v12.500h-6l-2 2.500l-2-2.500h-6z" stroke="none" fill="#fff" stroke-width="1" /><path d="M1265 743.500h10M1265 746h10M1265 748.500h6" stroke="#04060c" fill="none" stroke-width="1" /></svg><svg style="left:3px;top:3px" width="16" height="16" viewBox="0 0 16 16"><path d="M0 6.500L2.500 4.300L6 3.800L11.500 1.800L14 -.3L15.700 .3L12.700 4.300L7 6L3 7.600L1 8.200z" stroke="none" fill="#1414d8" stroke-width="1" /><path d="M.8 7.300l2.200-.9M3.500 5.500l4-.6l5-2.200M13.500 1.200l1.500-1.200" stroke="#f0e800" fill="none" stroke-width="0.9" /><rect x="9.3" y="5" width="6.7" height="5.3" fill="#fff" stroke="none"/><text x="9.5" y="10.2" font-size="7" fill="#00f" font-family="Liberation Sans,sans-serif" font-weight="700" textLength="6.300" lengthAdjust="spacingAndGlyphs">12</text><path d="M1.500 9.300h7M1.500 11.400h14M1.500 13.600h14M1.500 15.700h14" stroke="#000" fill="none" stroke-width="1" /><path d="M4 10.400h2.500M1.800 12.500h3M6.500 12.300l2.500-.8M4.500 14.700l3-1M9 14.600h2.500M5.500 15.200l1.500-.5" stroke="#f00" fill="none" stroke-width="1.2" /></svg><svg style="left:7px;top:24px" width="17" height="17" viewBox="0 0 17 17"><path d="M.5 .5h16v12l-4 4h-12z" stroke="#404040" fill="#c8c8c8" stroke-width="1" /><path d="M2 5l2-3l2 2l2.500-3l2.500 3l2-2l2 3.500v2h-13z" stroke="none" fill="#208020" stroke-width="1" /><ellipse cx="7.5" cy="10" rx="6" ry="3.500" fill="#fff" stroke="#404040" stroke-width=".8"/><ellipse cx="6" cy="13.500" rx="4" ry="2" fill="#e8e8e8" stroke="#404040" stroke-width=".7"/><path d="M5 9.500h5" stroke="#2020c0" fill="none" stroke-width="1.2" /><path d="M3 12l3-1M8 14l3-2" stroke="#208020" fill="none" stroke-width="1" /></svg></body></html>
